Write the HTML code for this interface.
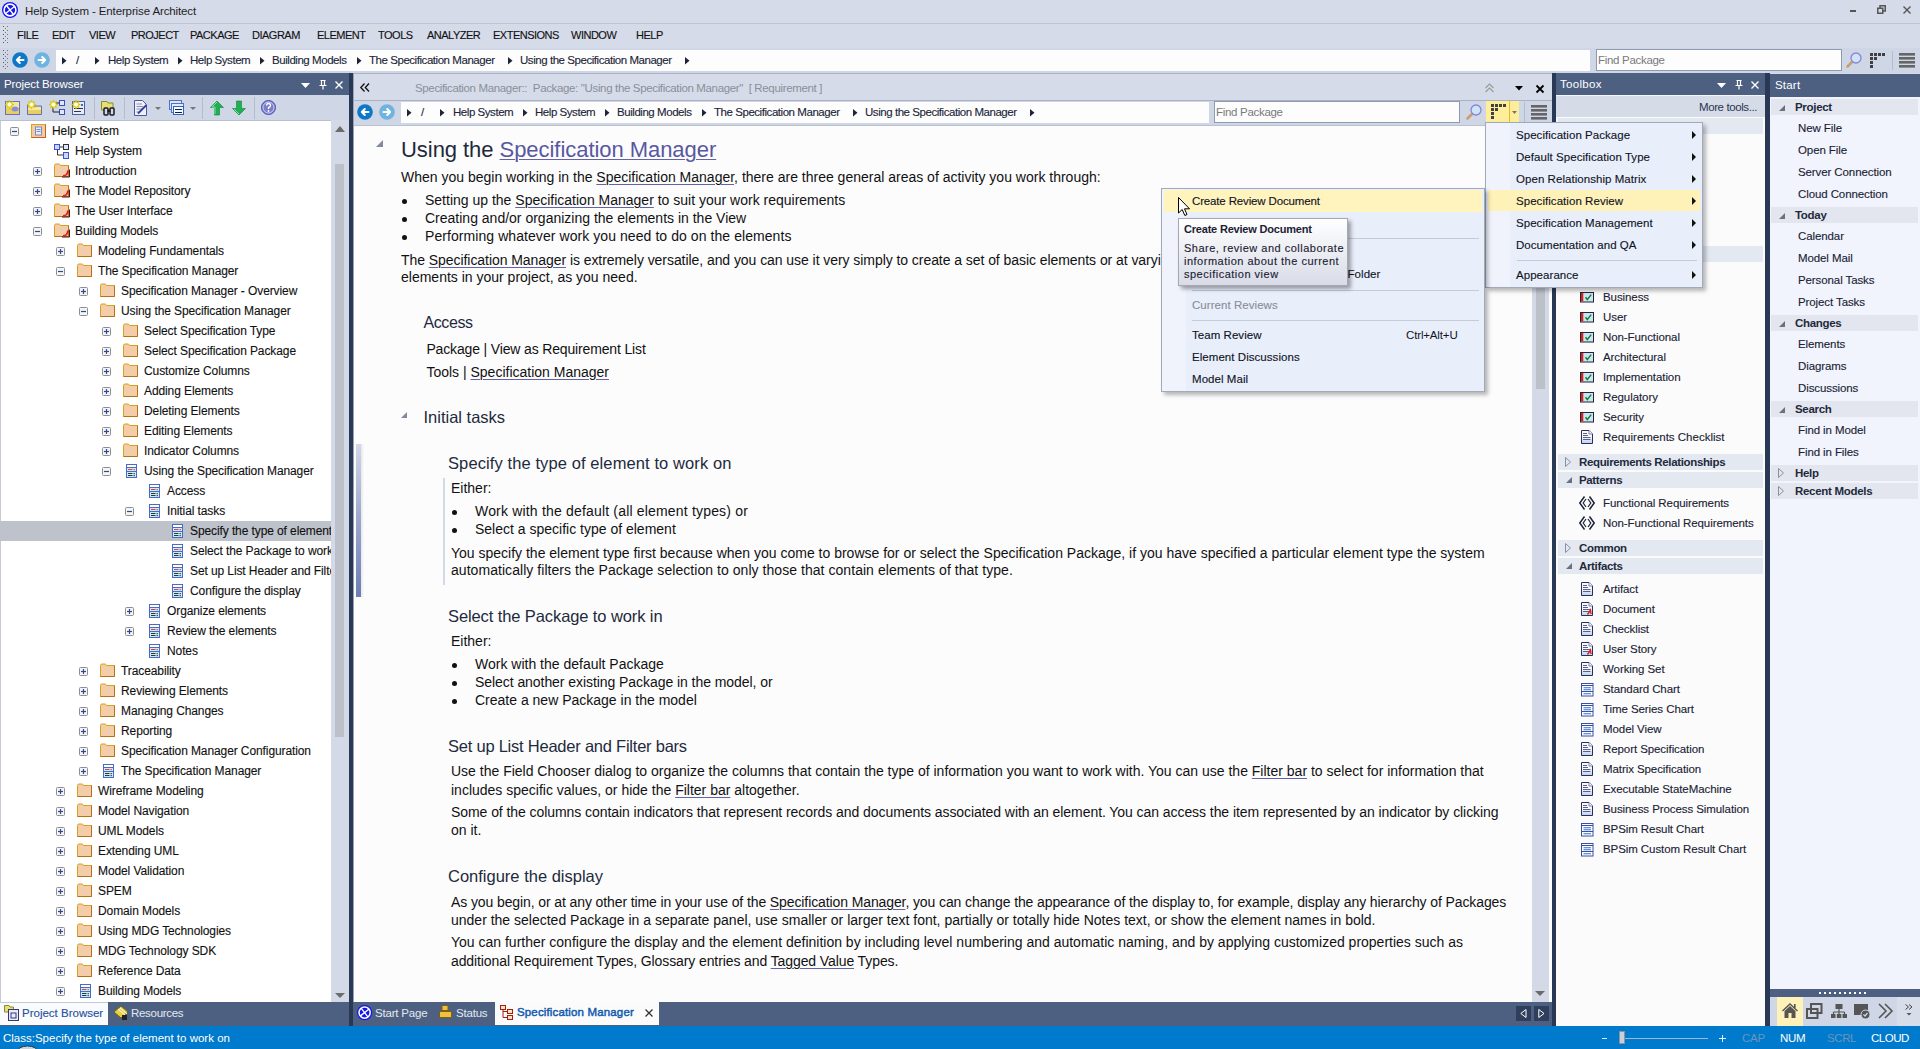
<!DOCTYPE html><html><head><meta charset="utf-8"><style>
html,body{margin:0;padding:0;}
body{width:1920px;height:1049px;position:relative;overflow:hidden;background:#D6DBE9;font-family:"Liberation Sans",sans-serif;}
.t{position:absolute;white-space:nowrap;line-height:1.15;}
.ui{-webkit-text-stroke:0.12px currentColor}
svg{overflow:visible}
</style></head><body>
<div style="position:absolute;left:0px;top:0px;width:1920px;height:23px;background:#D6DBE9"></div>
<div style="position:absolute;left:0px;top:23px;width:1920px;height:1px;background:#BFC5D3"></div>
<svg style="position:absolute;left:2px;top:2px;" width="17" height="17" viewBox="0 0 17 17"><g transform="scale(1.0)"><circle cx="8" cy="8" r="8" fill="#1414F0"/><circle cx="8" cy="8" r="5.9" fill="none" stroke="#fff" stroke-width="1.6"/><g transform="rotate(-38 8 8)"><path d="M8 2 V14 M2 8 H14" stroke="#fff" stroke-width="1.4"/></g></g></svg>
<div class="t " style="left:25px;top:4.59px;font-size:11.5px;color:#1E1E1E;font-weight:normal;letter-spacing:-0.12px">Help System - Enterprise Architect</div>
<div style="position:absolute;left:1850px;top:10px;width:6px;height:2px;background:#555"></div>
<svg style="position:absolute;left:1877px;top:5px;" width="9" height="9" viewBox="0 0 9 9"><rect x="0.75" y="3.25" width="5" height="5" fill="none" stroke="#555" stroke-width="1.5"/><path d="M3 3 V0.75 H8.25 V6 H6" fill="none" stroke="#555" stroke-width="1.5"/></svg>
<svg style="position:absolute;left:1903px;top:6px;" width="8" height="8" viewBox="0 0 8 8"><path d="M0.5 0.5 L7.5 7.5 M7.5 0.5 L0.5 7.5" stroke="#555" stroke-width="1.4"/></svg>
<div style="position:absolute;left:0px;top:24px;width:1920px;height:24px;background:#D6DBE9"></div>
<svg style="position:absolute;left:2px;top:26px;" width="5" height="18" viewBox="0 0 5 18"><rect x="1" y="0" width="1" height="1" fill="#555"/><rect x="5" y="0" width="1" height="1" fill="#777"/><rect x="3" y="2" width="1" height="1" fill="#555"/><rect x="3" y="2" width="1" height="1" fill="#777"/><rect x="1" y="4" width="1" height="1" fill="#555"/><rect x="5" y="4" width="1" height="1" fill="#777"/><rect x="3" y="6" width="1" height="1" fill="#555"/><rect x="3" y="6" width="1" height="1" fill="#777"/><rect x="1" y="8" width="1" height="1" fill="#555"/><rect x="5" y="8" width="1" height="1" fill="#777"/><rect x="3" y="10" width="1" height="1" fill="#555"/><rect x="3" y="10" width="1" height="1" fill="#777"/><rect x="1" y="12" width="1" height="1" fill="#555"/><rect x="5" y="12" width="1" height="1" fill="#777"/><rect x="3" y="14" width="1" height="1" fill="#555"/><rect x="3" y="14" width="1" height="1" fill="#777"/><rect x="1" y="16" width="1" height="1" fill="#555"/><rect x="5" y="16" width="1" height="1" fill="#777"/></svg>
<div class="t ui" style="left:17px;top:28.75px;font-size:11px;color:#111;font-weight:normal;letter-spacing:-0.5px">FILE</div>
<div class="t ui" style="left:52px;top:28.75px;font-size:11px;color:#111;font-weight:normal;letter-spacing:-0.5px">EDIT</div>
<div class="t ui" style="left:89px;top:28.75px;font-size:11px;color:#111;font-weight:normal;letter-spacing:-0.5px">VIEW</div>
<div class="t ui" style="left:131px;top:28.75px;font-size:11px;color:#111;font-weight:normal;letter-spacing:-0.5px">PROJECT</div>
<div class="t ui" style="left:190px;top:28.75px;font-size:11px;color:#111;font-weight:normal;letter-spacing:-0.5px">PACKAGE</div>
<div class="t ui" style="left:252px;top:28.75px;font-size:11px;color:#111;font-weight:normal;letter-spacing:-0.5px">DIAGRAM</div>
<div class="t ui" style="left:317px;top:28.75px;font-size:11px;color:#111;font-weight:normal;letter-spacing:-0.5px">ELEMENT</div>
<div class="t ui" style="left:378px;top:28.75px;font-size:11px;color:#111;font-weight:normal;letter-spacing:-0.5px">TOOLS</div>
<div class="t ui" style="left:427px;top:28.75px;font-size:11px;color:#111;font-weight:normal;letter-spacing:-0.5px">ANALYZER</div>
<div class="t ui" style="left:493px;top:28.75px;font-size:11px;color:#111;font-weight:normal;letter-spacing:-0.5px">EXTENSIONS</div>
<div class="t ui" style="left:571px;top:28.75px;font-size:11px;color:#111;font-weight:normal;letter-spacing:-0.5px">WINDOW</div>
<div class="t ui" style="left:636px;top:28.75px;font-size:11px;color:#111;font-weight:normal;letter-spacing:-0.5px">HELP</div>
<div style="position:absolute;left:0px;top:48px;width:1920px;height:25px;background:#CFD6E5"></div>
<svg style="position:absolute;left:2px;top:50px;" width="5" height="20" viewBox="0 0 5 20"><rect x="1" y="0" width="1" height="1" fill="#555"/><rect x="5" y="0" width="1" height="1" fill="#777"/><rect x="3" y="2" width="1" height="1" fill="#555"/><rect x="3" y="2" width="1" height="1" fill="#777"/><rect x="1" y="4" width="1" height="1" fill="#555"/><rect x="5" y="4" width="1" height="1" fill="#777"/><rect x="3" y="6" width="1" height="1" fill="#555"/><rect x="3" y="6" width="1" height="1" fill="#777"/><rect x="1" y="8" width="1" height="1" fill="#555"/><rect x="5" y="8" width="1" height="1" fill="#777"/><rect x="3" y="10" width="1" height="1" fill="#555"/><rect x="3" y="10" width="1" height="1" fill="#777"/><rect x="1" y="12" width="1" height="1" fill="#555"/><rect x="5" y="12" width="1" height="1" fill="#777"/><rect x="3" y="14" width="1" height="1" fill="#555"/><rect x="3" y="14" width="1" height="1" fill="#777"/><rect x="1" y="16" width="1" height="1" fill="#555"/><rect x="5" y="16" width="1" height="1" fill="#777"/><rect x="3" y="18" width="1" height="1" fill="#555"/><rect x="3" y="18" width="1" height="1" fill="#777"/></svg>
<svg style="position:absolute;left:12px;top:52px;" width="16" height="16" viewBox="0 0 16 16"><circle cx="8" cy="8" r="7.8" fill="#0F78C6"/><path d="M11.5 8 H4.8 M7.8 5 L4.8 8 L7.8 11" fill="none" stroke="#fff" stroke-width="2" stroke-linecap="round" stroke-linejoin="round"/></svg>
<svg style="position:absolute;left:34px;top:52px;" width="16" height="16" viewBox="0 0 16 16"><circle cx="8" cy="8" r="7.8" fill="#6FB3E0"/><path d="M4.5 8 H11.2 M8.2 5 L11.2 8 L8.2 11" fill="none" stroke="#fff" stroke-width="2" stroke-linecap="round" stroke-linejoin="round"/></svg>
<div style="position:absolute;left:56px;top:50px;width:1534px;height:21px;background:#FDFDFE"></div>
<svg style="position:absolute;left:61.5px;top:57px;" width="5" height="8" viewBox="0 0 5 8"><path d="M0 0 L4.5 3.75 L0 7.5Z" fill="#1B2536"/></svg>
<div class="t ui" style="left:76px;top:54.09px;font-size:11.5px;color:#1B2536;font-weight:normal;letter-spacing:-0.45px">/</div>
<svg style="position:absolute;left:94.5px;top:57px;" width="5" height="8" viewBox="0 0 5 8"><path d="M0 0 L4.5 3.75 L0 7.5Z" fill="#1B2536"/></svg>
<div class="t ui" style="left:108px;top:54.09px;font-size:11.5px;color:#1B2536;font-weight:normal;letter-spacing:-0.45px">Help System</div>
<svg style="position:absolute;left:177.5px;top:57px;" width="5" height="8" viewBox="0 0 5 8"><path d="M0 0 L4.5 3.75 L0 7.5Z" fill="#1B2536"/></svg>
<div class="t ui" style="left:190px;top:54.09px;font-size:11.5px;color:#1B2536;font-weight:normal;letter-spacing:-0.45px">Help System</div>
<svg style="position:absolute;left:259.5px;top:57px;" width="5" height="8" viewBox="0 0 5 8"><path d="M0 0 L4.5 3.75 L0 7.5Z" fill="#1B2536"/></svg>
<div class="t ui" style="left:272px;top:54.09px;font-size:11.5px;color:#1B2536;font-weight:normal;letter-spacing:-0.45px">Building Models</div>
<svg style="position:absolute;left:356.5px;top:57px;" width="5" height="8" viewBox="0 0 5 8"><path d="M0 0 L4.5 3.75 L0 7.5Z" fill="#1B2536"/></svg>
<div class="t ui" style="left:369px;top:54.09px;font-size:11.5px;color:#1B2536;font-weight:normal;letter-spacing:-0.45px">The Specification Manager</div>
<svg style="position:absolute;left:507.5px;top:57px;" width="5" height="8" viewBox="0 0 5 8"><path d="M0 0 L4.5 3.75 L0 7.5Z" fill="#1B2536"/></svg>
<div class="t ui" style="left:520px;top:54.09px;font-size:11.5px;color:#1B2536;font-weight:normal;letter-spacing:-0.45px">Using the Specification Manager</div>
<svg style="position:absolute;left:684.5px;top:57px;" width="5" height="8" viewBox="0 0 5 8"><path d="M0 0 L4.5 3.75 L0 7.5Z" fill="#1B2536"/></svg>
<div style="position:absolute;left:1596px;top:49px;width:246px;height:22px;background:#FDFDFE;border:1px solid #8E9AB0;box-sizing:border-box"></div>
<div class="t " style="left:1598px;top:54.09px;font-size:11.5px;color:#7A7A7A;font-weight:normal;letter-spacing:-0.3px">Find Package</div>
<svg style="position:absolute;left:1846px;top:52px;" width="16" height="16" viewBox="0 0 16 16"><path d="M1.5 14.5 L6 10" stroke="#C8A070" stroke-width="2.6" stroke-linecap="round"/><circle cx="10" cy="6" r="5" fill="#CDE4F7" stroke="#8C82D8" stroke-width="1.3"/></svg>
<svg style="position:absolute;left:1870px;top:53px;" width="15" height="15" viewBox="0 0 15 15"><rect x="0" y="0" width="3" height="3" fill="#404040"/><rect x="4" y="0" width="3" height="3" fill="#404040"/><rect x="8" y="0" width="3" height="3" fill="#404040"/><rect x="12" y="0" width="3" height="3" fill="#404040"/><rect x="0" y="4" width="3" height="3" fill="#404040"/><rect x="4" y="4" width="3" height="3" fill="#404040"/><rect x="0" y="8" width="3" height="3" fill="#404040"/><rect x="0" y="12" width="3" height="3" fill="#404040"/></svg>
<div style="position:absolute;left:1892px;top:51px;width:1px;height:19px;background:#B5BDCC"></div>
<svg style="position:absolute;left:1899px;top:53px;" width="16" height="15" viewBox="0 0 16 15"><rect x="0" y="0" width="16" height="2.6" fill="#666"/><rect x="0" y="4" width="16" height="2.6" fill="#666"/><rect x="0" y="8" width="16" height="2.6" fill="#666"/><rect x="0" y="12" width="16" height="2.6" fill="#666"/></svg>
<div style="position:absolute;left:0px;top:73px;width:349px;height:22px;background:#4D6082"></div>
<div class="t " style="left:4px;top:77.59px;font-size:11.5px;color:#FFFFFF;font-weight:normal;letter-spacing:-0.12px">Project Browser</div>
<svg style="position:absolute;left:301px;top:83px;" width="10" height="6" viewBox="0 0 10 6"><path d="M0 0 H9 L4.5 5Z" fill="#fff"/></svg>
<svg style="position:absolute;left:319px;top:80px;" width="8" height="10" viewBox="0 0 8 10"><path d="M1.5 0.5 H6.5 M2.5 0.5 V5.5 M5.5 0.5 V5.5 M0.5 5.5 H7.5 M4 5.5 V9.5" fill="none" stroke="#fff" stroke-width="1.2"/></svg>
<svg style="position:absolute;left:335px;top:81px;" width="8" height="8" viewBox="0 0 8 8"><path d="M0.5 0.5 L7.5 7.5 M7.5 0.5 L0.5 7.5" stroke="#fff" stroke-width="1.4"/></svg>
<div style="position:absolute;left:0px;top:95px;width:349px;height:25px;background:#CFD6E5"></div>
<div style="position:absolute;left:0px;top:120px;width:331px;height:1px;background:#B9C0CE"></div>
<div style="position:absolute;left:0px;top:121px;width:331px;height:881px;background:#FFFFFF"></div>
<div style="position:absolute;left:0px;top:121px;width:1px;height:881px;background:#C5CAD5"></div>
<div style="position:absolute;left:331px;top:121px;width:18px;height:881px;background:#D3D9E6"></div>
<svg style="position:absolute;left:335px;top:126px;" width="10" height="6" viewBox="0 0 10 6"><path d="M0 6 L5 0 L10 6Z" fill="#6B6B6B"/></svg>
<div style="position:absolute;left:335px;top:164px;width:9px;height:573px;background:#BCC0C9"></div>
<svg style="position:absolute;left:335px;top:993px;" width="10" height="5" viewBox="0 0 10 5"><path d="M0 0 H10 L5 5Z" fill="#6B6B6B"/></svg>
<div style="position:absolute;left:349px;top:73px;width:4px;height:953px;background:#293955"></div>
<svg style="position:absolute;left:5px;top:100px;" width="16" height="16" viewBox="0 0 16 16"><rect x="0.5" y="1.5" width="14" height="13" fill="#E8D060" stroke="#6A70B8"/><rect x="1" y="2" width="13" height="6" fill="#F4E8A0"/><ellipse cx="10" cy="9" rx="3.5" ry="2.5" fill="#8890D8"/><line x1="6.60" y1="4.50" x2="8.88" y2="4.50" stroke="#D8C000" stroke-width="1.3"/><line x1="5.98" y1="5.98" x2="7.59" y2="7.59" stroke="#D8C000" stroke-width="1.3"/><line x1="4.50" y1="6.60" x2="4.50" y2="8.88" stroke="#D8C000" stroke-width="1.3"/><line x1="3.02" y1="5.98" x2="1.41" y2="7.59" stroke="#D8C000" stroke-width="1.3"/><line x1="2.40" y1="4.50" x2="0.12" y2="4.50" stroke="#D8C000" stroke-width="1.3"/><line x1="3.02" y1="3.02" x2="1.41" y2="1.41" stroke="#D8C000" stroke-width="1.3"/><line x1="4.50" y1="2.40" x2="4.50" y2="0.12" stroke="#D8C000" stroke-width="1.3"/><line x1="5.98" y1="3.02" x2="7.59" y2="1.41" stroke="#D8C000" stroke-width="1.3"/><circle cx="4.5" cy="4.5" r="2.625" fill="#FFFFE0" stroke="#E0C800" stroke-width="1"/></svg>
<svg style="position:absolute;left:27px;top:100px;" width="16" height="16" viewBox="0 0 16 16"><path d="M0.5 4.5 H6 L7 6 H14.5 V14.5 H0.5Z" fill="#E8D060" stroke="#6A70B8"/><rect x="1" y="7" width="13" height="3" fill="#F4E8A0"/><line x1="6.60" y1="4.50" x2="8.88" y2="4.50" stroke="#D8C000" stroke-width="1.3"/><line x1="5.98" y1="5.98" x2="7.59" y2="7.59" stroke="#D8C000" stroke-width="1.3"/><line x1="4.50" y1="6.60" x2="4.50" y2="8.88" stroke="#D8C000" stroke-width="1.3"/><line x1="3.02" y1="5.98" x2="1.41" y2="7.59" stroke="#D8C000" stroke-width="1.3"/><line x1="2.40" y1="4.50" x2="0.12" y2="4.50" stroke="#D8C000" stroke-width="1.3"/><line x1="3.02" y1="3.02" x2="1.41" y2="1.41" stroke="#D8C000" stroke-width="1.3"/><line x1="4.50" y1="2.40" x2="4.50" y2="0.12" stroke="#D8C000" stroke-width="1.3"/><line x1="5.98" y1="3.02" x2="7.59" y2="1.41" stroke="#D8C000" stroke-width="1.3"/><circle cx="4.5" cy="4.5" r="2.625" fill="#FFFFE0" stroke="#E0C800" stroke-width="1"/></svg>
<svg style="position:absolute;left:49px;top:100px;" width="16" height="16" viewBox="0 0 16 16"><rect x="10.5" y="0.5" width="5" height="5" fill="#E0E8FF" stroke="#4050B0"/><rect x="10.5" y="9.5" width="5" height="5" fill="#E0E8FF" stroke="#4050B0"/><path d="M4 6 V12 H10.5 M7 3 H10.5" stroke="#222" fill="none"/><line x1="6.60" y1="4.50" x2="8.88" y2="4.50" stroke="#D8C000" stroke-width="1.3"/><line x1="5.98" y1="5.98" x2="7.59" y2="7.59" stroke="#D8C000" stroke-width="1.3"/><line x1="4.50" y1="6.60" x2="4.50" y2="8.88" stroke="#D8C000" stroke-width="1.3"/><line x1="3.02" y1="5.98" x2="1.41" y2="7.59" stroke="#D8C000" stroke-width="1.3"/><line x1="2.40" y1="4.50" x2="0.12" y2="4.50" stroke="#D8C000" stroke-width="1.3"/><line x1="3.02" y1="3.02" x2="1.41" y2="1.41" stroke="#D8C000" stroke-width="1.3"/><line x1="4.50" y1="2.40" x2="4.50" y2="0.12" stroke="#D8C000" stroke-width="1.3"/><line x1="5.98" y1="3.02" x2="7.59" y2="1.41" stroke="#D8C000" stroke-width="1.3"/><circle cx="4.5" cy="4.5" r="2.625" fill="#FFFFE0" stroke="#E0C800" stroke-width="1"/></svg>
<svg style="position:absolute;left:72px;top:100px;" width="13" height="16" viewBox="0 0 13 16"><rect x="0.5" y="1.5" width="12" height="13" fill="#E8ECF8" stroke="#5060A8"/><path d="M2 8.5 H11 M2 11.5 H9" stroke="#334" stroke-width="1.2"/><rect x="9" y="4" width="2" height="2" fill="#3070D0"/><line x1="6.10" y1="4.50" x2="8.38" y2="4.50" stroke="#D8C000" stroke-width="1.3"/><line x1="5.48" y1="5.98" x2="7.09" y2="7.59" stroke="#D8C000" stroke-width="1.3"/><line x1="4.00" y1="6.60" x2="4.00" y2="8.88" stroke="#D8C000" stroke-width="1.3"/><line x1="2.52" y1="5.98" x2="0.91" y2="7.59" stroke="#D8C000" stroke-width="1.3"/><line x1="1.90" y1="4.50" x2="-0.38" y2="4.50" stroke="#D8C000" stroke-width="1.3"/><line x1="2.52" y1="3.02" x2="0.91" y2="1.41" stroke="#D8C000" stroke-width="1.3"/><line x1="4.00" y1="2.40" x2="4.00" y2="0.12" stroke="#D8C000" stroke-width="1.3"/><line x1="5.48" y1="3.02" x2="7.09" y2="1.41" stroke="#D8C000" stroke-width="1.3"/><circle cx="4" cy="4.5" r="2.625" fill="#FFFFE0" stroke="#E0C800" stroke-width="1"/></svg>
<div style="position:absolute;left:94px;top:97px;width:1px;height:22px;background:#B5BDCC"></div>
<svg style="position:absolute;left:101px;top:101px;" width="16" height="15" viewBox="0 0 16 15"><path d="M0.5 0.5 H6 L7 2 H12 V9 H0.5Z" fill="#E8E070" stroke="#8A8A30"/><rect x="3" y="7" width="4" height="7" rx="1" fill="#D8D8E0" stroke="#1A1A28" stroke-width="1.5"/><rect x="9" y="7" width="4" height="7" rx="1" fill="#D8D8E0" stroke="#1A1A28" stroke-width="1.5"/><rect x="6.5" y="9" width="3" height="2" fill="#1A1A28"/></svg>
<div style="position:absolute;left:124px;top:97px;width:1px;height:22px;background:#B5BDCC"></div>
<svg style="position:absolute;left:134px;top:100px;" width="14" height="16" viewBox="0 0 14 16"><path d="M0.5 0.5 H8.5 L12.5 4.5 V15.5 H0.5Z" fill="#F0F0F8" stroke="#4A58A8"/><path d="M2.5 4 H8 M2.5 6.5 H9 M2.5 9 H9 M2.5 12 H6" stroke="#8890A8"/><path d="M4 13.5 L12.5 5" stroke="#3040A0" stroke-width="1.8"/></svg>
<svg style="position:absolute;left:155px;top:107px;" width="6" height="3" viewBox="0 0 6 3"><path d="M0 0 H6 L3 3Z" fill="#777"/></svg>
<svg style="position:absolute;left:169px;top:100px;" width="16" height="16" viewBox="0 0 16 16"><rect x="0.5" y="0.5" width="12" height="9" fill="#D8E4F8" stroke="#5070C8"/><rect x="2.5" y="3.5" width="12" height="9" fill="#E4ECFA" stroke="#5070C8"/><rect x="4.5" y="6.5" width="10" height="8" fill="#F4F8FF" stroke="#3060C0"/><path d="M6 9.5 H13 M6 12.5 H13" stroke="#102040" stroke-width="1.2"/></svg>
<svg style="position:absolute;left:190px;top:107px;" width="6" height="3" viewBox="0 0 6 3"><path d="M0 0 H6 L3 3Z" fill="#777"/></svg>
<div style="position:absolute;left:202px;top:97px;width:1px;height:22px;background:#B5BDCC"></div>
<svg style="position:absolute;left:210px;top:101px;" width="14" height="14" viewBox="0 0 14 14"><path d="M7 0 L13.5 6.5 H9.5 V14 H4.5 V6.5 H0.5Z" fill="#20B050" stroke="#108040" stroke-width="0.6"/><path d="M7 1 L2 6 H5 V13" stroke="#80E0A0" fill="none" stroke-width="1"/></svg>
<svg style="position:absolute;left:232px;top:101px;" width="14" height="14" viewBox="0 0 14 14"><path d="M7 14 L13.5 7.5 H9.5 V0 H4.5 V7.5 H0.5Z" fill="#20B050" stroke="#108040" stroke-width="0.6"/><path d="M2 8 L7 13" stroke="#80E0A0" fill="none" stroke-width="1"/></svg>
<div style="position:absolute;left:254px;top:97px;width:1px;height:22px;background:#B5BDCC"></div>
<svg style="position:absolute;left:261px;top:100px;" width="16" height="16" viewBox="0 0 16 16"><circle cx="7.5" cy="7.5" r="7" fill="#7C7EC8" stroke="#4050B8" stroke-width="1"/><circle cx="7.5" cy="7.5" r="5.5" fill="none" stroke="#E8E8FF" stroke-width="0.8"/><path d="M5.5 5.5 Q5.5 3.5 7.5 3.5 Q9.5 3.5 9.5 5.5 Q9.5 7 7.5 7.5 V9" fill="none" stroke="#fff" stroke-width="1.3"/><circle cx="7.5" cy="11" r="0.9" fill="#fff"/></svg>
<div style="position:absolute;left:0;top:0;width:331px;height:1002px;overflow:hidden;clip-path:inset(121px 0 0 0px)">
<svg style="position:absolute;left:10px;top:127px;" width="9" height="9" viewBox="0 0 9 9"><rect x="0.5" y="0.5" width="8" height="8" rx="1" fill="#F4F4F4" stroke="#8E8E8E"/><path d="M2 4.5 H7" stroke="#2A4A9A" stroke-width="1.2"/></svg>
<svg style="position:absolute;left:31px;top:124px;" width="16" height="15" viewBox="0 0 16 15"><rect x="0.5" y="0.5" width="14" height="13" fill="#F3CBA5" stroke="#E0A020"/><path d="M0.5 13.5 H14.5 V0.5" fill="none" stroke="#C86020"/><rect x="4.5" y="3" width="6" height="8" fill="#E8EEFA" stroke="#7A8CC8"/><path d="M5.5 5.5 H9.5 M5.5 7.5 H9.5" stroke="#7A8CC8"/></svg>
<div class="t ui" style="left:52px;top:124.84px;font-size:12px;color:#111;font-weight:normal;letter-spacing:-0.1px">Help System</div>
<svg style="position:absolute;left:54px;top:144px;" width="16" height="16" viewBox="0 0 16 16"><path d="M3.5 4 V11 H10 M5 3 H10" stroke="#333" fill="none"/><rect x="0.5" y="0.5" width="5" height="5" fill="#C8D8FF" stroke="#4050D0"/><rect x="9.5" y="0.5" width="5" height="5" fill="#DDE6FF" stroke="#333"/><rect x="9.5" y="8.5" width="5" height="6" fill="#C8D8FF" stroke="#4050D0"/></svg>
<div class="t ui" style="left:75px;top:144.84px;font-size:12px;color:#111;font-weight:normal;letter-spacing:-0.1px">Help System</div>
<svg style="position:absolute;left:33px;top:167px;" width="9" height="9" viewBox="0 0 9 9"><rect x="0.5" y="0.5" width="8" height="8" rx="1" fill="#F4F4F4" stroke="#8E8E8E"/><path d="M2 4.5 H7" stroke="#2A4A9A" stroke-width="1.2"/><path d="M4.5 2 V7" stroke="#2A4A9A" stroke-width="1.2"/></svg>
<svg style="position:absolute;left:54px;top:163px;" width="16" height="15" viewBox="0 0 16 15"><path d="M0.5 2.5 Q0.5 1 2 1 H5 Q6 1 6.5 2.5 H14.5 V13.5 H0.5Z" fill="#F3CDA8" stroke="#D8A020"/><path d="M0.5 13.5 H14.5 V2.5" fill="none" stroke="#B87018"/><path d="M8 14 H15.5 V6.5" fill="none" stroke="#3A1A10" stroke-width="1"/><path d="M9 13 Q13.5 12.8 14 7.5" fill="none" stroke="#E01818" stroke-width="1.8"/><path d="M11.5 12.5 Q14 12 14.5 10" fill="none" stroke="#FF6060" stroke-width="0.6"/></svg>
<div class="t ui" style="left:75px;top:164.84px;font-size:12px;color:#111;font-weight:normal;letter-spacing:-0.1px">Introduction</div>
<svg style="position:absolute;left:33px;top:187px;" width="9" height="9" viewBox="0 0 9 9"><rect x="0.5" y="0.5" width="8" height="8" rx="1" fill="#F4F4F4" stroke="#8E8E8E"/><path d="M2 4.5 H7" stroke="#2A4A9A" stroke-width="1.2"/><path d="M4.5 2 V7" stroke="#2A4A9A" stroke-width="1.2"/></svg>
<svg style="position:absolute;left:54px;top:183px;" width="16" height="15" viewBox="0 0 16 15"><path d="M0.5 2.5 Q0.5 1 2 1 H5 Q6 1 6.5 2.5 H14.5 V13.5 H0.5Z" fill="#F3CDA8" stroke="#D8A020"/><path d="M0.5 13.5 H14.5 V2.5" fill="none" stroke="#B87018"/><path d="M8 14 H15.5 V6.5" fill="none" stroke="#3A1A10" stroke-width="1"/><path d="M9 13 Q13.5 12.8 14 7.5" fill="none" stroke="#E01818" stroke-width="1.8"/><path d="M11.5 12.5 Q14 12 14.5 10" fill="none" stroke="#FF6060" stroke-width="0.6"/></svg>
<div class="t ui" style="left:75px;top:184.84px;font-size:12px;color:#111;font-weight:normal;letter-spacing:-0.1px">The Model Repository</div>
<svg style="position:absolute;left:33px;top:207px;" width="9" height="9" viewBox="0 0 9 9"><rect x="0.5" y="0.5" width="8" height="8" rx="1" fill="#F4F4F4" stroke="#8E8E8E"/><path d="M2 4.5 H7" stroke="#2A4A9A" stroke-width="1.2"/><path d="M4.5 2 V7" stroke="#2A4A9A" stroke-width="1.2"/></svg>
<svg style="position:absolute;left:54px;top:203px;" width="16" height="15" viewBox="0 0 16 15"><path d="M0.5 2.5 Q0.5 1 2 1 H5 Q6 1 6.5 2.5 H14.5 V13.5 H0.5Z" fill="#F3CDA8" stroke="#D8A020"/><path d="M0.5 13.5 H14.5 V2.5" fill="none" stroke="#B87018"/><path d="M8 14 H15.5 V6.5" fill="none" stroke="#3A1A10" stroke-width="1"/><path d="M9 13 Q13.5 12.8 14 7.5" fill="none" stroke="#E01818" stroke-width="1.8"/><path d="M11.5 12.5 Q14 12 14.5 10" fill="none" stroke="#FF6060" stroke-width="0.6"/></svg>
<div class="t ui" style="left:75px;top:204.84px;font-size:12px;color:#111;font-weight:normal;letter-spacing:-0.1px">The User Interface</div>
<svg style="position:absolute;left:33px;top:227px;" width="9" height="9" viewBox="0 0 9 9"><rect x="0.5" y="0.5" width="8" height="8" rx="1" fill="#F4F4F4" stroke="#8E8E8E"/><path d="M2 4.5 H7" stroke="#2A4A9A" stroke-width="1.2"/></svg>
<svg style="position:absolute;left:54px;top:223px;" width="16" height="15" viewBox="0 0 16 15"><path d="M0.5 2.5 Q0.5 1 2 1 H5 Q6 1 6.5 2.5 H14.5 V13.5 H0.5Z" fill="#F3CDA8" stroke="#D8A020"/><path d="M0.5 13.5 H14.5 V2.5" fill="none" stroke="#B87018"/><path d="M8 14 H15.5 V6.5" fill="none" stroke="#3A1A10" stroke-width="1"/><path d="M9 13 Q13.5 12.8 14 7.5" fill="none" stroke="#E01818" stroke-width="1.8"/><path d="M11.5 12.5 Q14 12 14.5 10" fill="none" stroke="#FF6060" stroke-width="0.6"/></svg>
<div class="t ui" style="left:75px;top:224.84px;font-size:12px;color:#111;font-weight:normal;letter-spacing:-0.1px">Building Models</div>
<svg style="position:absolute;left:56px;top:247px;" width="9" height="9" viewBox="0 0 9 9"><rect x="0.5" y="0.5" width="8" height="8" rx="1" fill="#F4F4F4" stroke="#8E8E8E"/><path d="M2 4.5 H7" stroke="#2A4A9A" stroke-width="1.2"/><path d="M4.5 2 V7" stroke="#2A4A9A" stroke-width="1.2"/></svg>
<svg style="position:absolute;left:77px;top:243px;" width="16" height="15" viewBox="0 0 16 15"><path d="M0.5 2.5 Q0.5 1 2 1 H5 Q6 1 6.5 2.5 H14.5 V13.5 H0.5Z" fill="#F3CDA8" stroke="#D8A020"/><path d="M0.5 13.5 H14.5 V2.5" fill="none" stroke="#B87018"/></svg>
<div class="t ui" style="left:98px;top:244.84px;font-size:12px;color:#111;font-weight:normal;letter-spacing:-0.1px">Modeling Fundamentals</div>
<svg style="position:absolute;left:56px;top:267px;" width="9" height="9" viewBox="0 0 9 9"><rect x="0.5" y="0.5" width="8" height="8" rx="1" fill="#F4F4F4" stroke="#8E8E8E"/><path d="M2 4.5 H7" stroke="#2A4A9A" stroke-width="1.2"/></svg>
<svg style="position:absolute;left:77px;top:263px;" width="16" height="15" viewBox="0 0 16 15"><path d="M0.5 2.5 Q0.5 1 2 1 H5 Q6 1 6.5 2.5 H14.5 V13.5 H0.5Z" fill="#F3CDA8" stroke="#D8A020"/><path d="M0.5 13.5 H14.5 V2.5" fill="none" stroke="#B87018"/></svg>
<div class="t ui" style="left:98px;top:264.84px;font-size:12px;color:#111;font-weight:normal;letter-spacing:-0.1px">The Specification Manager</div>
<svg style="position:absolute;left:79px;top:287px;" width="9" height="9" viewBox="0 0 9 9"><rect x="0.5" y="0.5" width="8" height="8" rx="1" fill="#F4F4F4" stroke="#8E8E8E"/><path d="M2 4.5 H7" stroke="#2A4A9A" stroke-width="1.2"/><path d="M4.5 2 V7" stroke="#2A4A9A" stroke-width="1.2"/></svg>
<svg style="position:absolute;left:100px;top:283px;" width="16" height="15" viewBox="0 0 16 15"><path d="M0.5 2.5 Q0.5 1 2 1 H5 Q6 1 6.5 2.5 H14.5 V13.5 H0.5Z" fill="#F3CDA8" stroke="#D8A020"/><path d="M0.5 13.5 H14.5 V2.5" fill="none" stroke="#B87018"/></svg>
<div class="t ui" style="left:121px;top:284.84px;font-size:12px;color:#111;font-weight:normal;letter-spacing:-0.1px">Specification Manager - Overview</div>
<svg style="position:absolute;left:79px;top:307px;" width="9" height="9" viewBox="0 0 9 9"><rect x="0.5" y="0.5" width="8" height="8" rx="1" fill="#F4F4F4" stroke="#8E8E8E"/><path d="M2 4.5 H7" stroke="#2A4A9A" stroke-width="1.2"/></svg>
<svg style="position:absolute;left:100px;top:303px;" width="16" height="15" viewBox="0 0 16 15"><path d="M0.5 2.5 Q0.5 1 2 1 H5 Q6 1 6.5 2.5 H14.5 V13.5 H0.5Z" fill="#F3CDA8" stroke="#D8A020"/><path d="M0.5 13.5 H14.5 V2.5" fill="none" stroke="#B87018"/></svg>
<div class="t ui" style="left:121px;top:304.84px;font-size:12px;color:#111;font-weight:normal;letter-spacing:-0.1px">Using the Specification Manager</div>
<svg style="position:absolute;left:102px;top:327px;" width="9" height="9" viewBox="0 0 9 9"><rect x="0.5" y="0.5" width="8" height="8" rx="1" fill="#F4F4F4" stroke="#8E8E8E"/><path d="M2 4.5 H7" stroke="#2A4A9A" stroke-width="1.2"/><path d="M4.5 2 V7" stroke="#2A4A9A" stroke-width="1.2"/></svg>
<svg style="position:absolute;left:123px;top:323px;" width="16" height="15" viewBox="0 0 16 15"><path d="M0.5 2.5 Q0.5 1 2 1 H5 Q6 1 6.5 2.5 H14.5 V13.5 H0.5Z" fill="#F3CDA8" stroke="#D8A020"/><path d="M0.5 13.5 H14.5 V2.5" fill="none" stroke="#B87018"/></svg>
<div class="t ui" style="left:144px;top:324.84px;font-size:12px;color:#111;font-weight:normal;letter-spacing:-0.1px">Select Specification Type</div>
<svg style="position:absolute;left:102px;top:347px;" width="9" height="9" viewBox="0 0 9 9"><rect x="0.5" y="0.5" width="8" height="8" rx="1" fill="#F4F4F4" stroke="#8E8E8E"/><path d="M2 4.5 H7" stroke="#2A4A9A" stroke-width="1.2"/><path d="M4.5 2 V7" stroke="#2A4A9A" stroke-width="1.2"/></svg>
<svg style="position:absolute;left:123px;top:343px;" width="16" height="15" viewBox="0 0 16 15"><path d="M0.5 2.5 Q0.5 1 2 1 H5 Q6 1 6.5 2.5 H14.5 V13.5 H0.5Z" fill="#F3CDA8" stroke="#D8A020"/><path d="M0.5 13.5 H14.5 V2.5" fill="none" stroke="#B87018"/></svg>
<div class="t ui" style="left:144px;top:344.84px;font-size:12px;color:#111;font-weight:normal;letter-spacing:-0.1px">Select Specification Package</div>
<svg style="position:absolute;left:102px;top:367px;" width="9" height="9" viewBox="0 0 9 9"><rect x="0.5" y="0.5" width="8" height="8" rx="1" fill="#F4F4F4" stroke="#8E8E8E"/><path d="M2 4.5 H7" stroke="#2A4A9A" stroke-width="1.2"/><path d="M4.5 2 V7" stroke="#2A4A9A" stroke-width="1.2"/></svg>
<svg style="position:absolute;left:123px;top:363px;" width="16" height="15" viewBox="0 0 16 15"><path d="M0.5 2.5 Q0.5 1 2 1 H5 Q6 1 6.5 2.5 H14.5 V13.5 H0.5Z" fill="#F3CDA8" stroke="#D8A020"/><path d="M0.5 13.5 H14.5 V2.5" fill="none" stroke="#B87018"/></svg>
<div class="t ui" style="left:144px;top:364.84px;font-size:12px;color:#111;font-weight:normal;letter-spacing:-0.1px">Customize Columns</div>
<svg style="position:absolute;left:102px;top:387px;" width="9" height="9" viewBox="0 0 9 9"><rect x="0.5" y="0.5" width="8" height="8" rx="1" fill="#F4F4F4" stroke="#8E8E8E"/><path d="M2 4.5 H7" stroke="#2A4A9A" stroke-width="1.2"/><path d="M4.5 2 V7" stroke="#2A4A9A" stroke-width="1.2"/></svg>
<svg style="position:absolute;left:123px;top:383px;" width="16" height="15" viewBox="0 0 16 15"><path d="M0.5 2.5 Q0.5 1 2 1 H5 Q6 1 6.5 2.5 H14.5 V13.5 H0.5Z" fill="#F3CDA8" stroke="#D8A020"/><path d="M0.5 13.5 H14.5 V2.5" fill="none" stroke="#B87018"/></svg>
<div class="t ui" style="left:144px;top:384.84px;font-size:12px;color:#111;font-weight:normal;letter-spacing:-0.1px">Adding Elements</div>
<svg style="position:absolute;left:102px;top:407px;" width="9" height="9" viewBox="0 0 9 9"><rect x="0.5" y="0.5" width="8" height="8" rx="1" fill="#F4F4F4" stroke="#8E8E8E"/><path d="M2 4.5 H7" stroke="#2A4A9A" stroke-width="1.2"/><path d="M4.5 2 V7" stroke="#2A4A9A" stroke-width="1.2"/></svg>
<svg style="position:absolute;left:123px;top:403px;" width="16" height="15" viewBox="0 0 16 15"><path d="M0.5 2.5 Q0.5 1 2 1 H5 Q6 1 6.5 2.5 H14.5 V13.5 H0.5Z" fill="#F3CDA8" stroke="#D8A020"/><path d="M0.5 13.5 H14.5 V2.5" fill="none" stroke="#B87018"/></svg>
<div class="t ui" style="left:144px;top:404.84px;font-size:12px;color:#111;font-weight:normal;letter-spacing:-0.1px">Deleting Elements</div>
<svg style="position:absolute;left:102px;top:427px;" width="9" height="9" viewBox="0 0 9 9"><rect x="0.5" y="0.5" width="8" height="8" rx="1" fill="#F4F4F4" stroke="#8E8E8E"/><path d="M2 4.5 H7" stroke="#2A4A9A" stroke-width="1.2"/><path d="M4.5 2 V7" stroke="#2A4A9A" stroke-width="1.2"/></svg>
<svg style="position:absolute;left:123px;top:423px;" width="16" height="15" viewBox="0 0 16 15"><path d="M0.5 2.5 Q0.5 1 2 1 H5 Q6 1 6.5 2.5 H14.5 V13.5 H0.5Z" fill="#F3CDA8" stroke="#D8A020"/><path d="M0.5 13.5 H14.5 V2.5" fill="none" stroke="#B87018"/></svg>
<div class="t ui" style="left:144px;top:424.84px;font-size:12px;color:#111;font-weight:normal;letter-spacing:-0.1px">Editing Elements</div>
<svg style="position:absolute;left:102px;top:447px;" width="9" height="9" viewBox="0 0 9 9"><rect x="0.5" y="0.5" width="8" height="8" rx="1" fill="#F4F4F4" stroke="#8E8E8E"/><path d="M2 4.5 H7" stroke="#2A4A9A" stroke-width="1.2"/><path d="M4.5 2 V7" stroke="#2A4A9A" stroke-width="1.2"/></svg>
<svg style="position:absolute;left:123px;top:443px;" width="16" height="15" viewBox="0 0 16 15"><path d="M0.5 2.5 Q0.5 1 2 1 H5 Q6 1 6.5 2.5 H14.5 V13.5 H0.5Z" fill="#F3CDA8" stroke="#D8A020"/><path d="M0.5 13.5 H14.5 V2.5" fill="none" stroke="#B87018"/></svg>
<div class="t ui" style="left:144px;top:444.84px;font-size:12px;color:#111;font-weight:normal;letter-spacing:-0.1px">Indicator Columns</div>
<svg style="position:absolute;left:102px;top:467px;" width="9" height="9" viewBox="0 0 9 9"><rect x="0.5" y="0.5" width="8" height="8" rx="1" fill="#F4F4F4" stroke="#8E8E8E"/><path d="M2 4.5 H7" stroke="#2A4A9A" stroke-width="1.2"/></svg>
<svg style="position:absolute;left:126px;top:464px;" width="11" height="14" viewBox="0 0 11 14"><rect x="0.5" y="0.5" width="10" height="13" fill="#C6EEF8" stroke="#4A68C4"/><rect x="1" y="1" width="9" height="2.5" fill="#FFFFFF"/><path d="M1 3.5 H10 M1 7.5 H10" stroke="#4A68C4"/><path d="M2 5.5 H6.5" stroke="#F03C3C"/><rect x="7.6" y="5" width="1.2" height="1.2" fill="#F03C3C"/><path d="M2 9.5 H6.5 M2 11.5 H6.5" stroke="#333"/><rect x="7.6" y="9" width="1.2" height="1.2" fill="#333"/><rect x="7.6" y="11" width="1.2" height="1.2" fill="#333"/></svg>
<div class="t ui" style="left:144px;top:464.84px;font-size:12px;color:#111;font-weight:normal;letter-spacing:-0.1px">Using the Specification Manager</div>
<svg style="position:absolute;left:149px;top:484px;" width="11" height="14" viewBox="0 0 11 14"><rect x="0.5" y="0.5" width="10" height="13" fill="#C6EEF8" stroke="#4A68C4"/><rect x="1" y="1" width="9" height="2.5" fill="#FFFFFF"/><path d="M1 3.5 H10 M1 7.5 H10" stroke="#4A68C4"/><path d="M2 5.5 H6.5" stroke="#F03C3C"/><rect x="7.6" y="5" width="1.2" height="1.2" fill="#F03C3C"/><path d="M2 9.5 H6.5 M2 11.5 H6.5" stroke="#333"/><rect x="7.6" y="9" width="1.2" height="1.2" fill="#333"/><rect x="7.6" y="11" width="1.2" height="1.2" fill="#333"/></svg>
<div class="t ui" style="left:167px;top:484.84px;font-size:12px;color:#111;font-weight:normal;letter-spacing:-0.1px">Access</div>
<svg style="position:absolute;left:125px;top:507px;" width="9" height="9" viewBox="0 0 9 9"><rect x="0.5" y="0.5" width="8" height="8" rx="1" fill="#F4F4F4" stroke="#8E8E8E"/><path d="M2 4.5 H7" stroke="#2A4A9A" stroke-width="1.2"/></svg>
<svg style="position:absolute;left:149px;top:504px;" width="11" height="14" viewBox="0 0 11 14"><rect x="0.5" y="0.5" width="10" height="13" fill="#C6EEF8" stroke="#4A68C4"/><rect x="1" y="1" width="9" height="2.5" fill="#FFFFFF"/><path d="M1 3.5 H10 M1 7.5 H10" stroke="#4A68C4"/><path d="M2 5.5 H6.5" stroke="#F03C3C"/><rect x="7.6" y="5" width="1.2" height="1.2" fill="#F03C3C"/><path d="M2 9.5 H6.5 M2 11.5 H6.5" stroke="#333"/><rect x="7.6" y="9" width="1.2" height="1.2" fill="#333"/><rect x="7.6" y="11" width="1.2" height="1.2" fill="#333"/></svg>
<div class="t ui" style="left:167px;top:504.84px;font-size:12px;color:#111;font-weight:normal;letter-spacing:-0.1px">Initial tasks</div>
<div style="position:absolute;left:0px;top:521px;width:331px;height:20px;background:#BEC2CB"></div>
<svg style="position:absolute;left:172px;top:524px;" width="11" height="14" viewBox="0 0 11 14"><rect x="0.5" y="0.5" width="10" height="13" fill="#C6EEF8" stroke="#4A68C4"/><rect x="1" y="1" width="9" height="2.5" fill="#FFFFFF"/><path d="M1 3.5 H10 M1 7.5 H10" stroke="#4A68C4"/><path d="M2 5.5 H6.5" stroke="#F03C3C"/><rect x="7.6" y="5" width="1.2" height="1.2" fill="#F03C3C"/><path d="M2 9.5 H6.5 M2 11.5 H6.5" stroke="#333"/><rect x="7.6" y="9" width="1.2" height="1.2" fill="#333"/><rect x="7.6" y="11" width="1.2" height="1.2" fill="#333"/></svg>
<div class="t ui" style="left:190px;top:524.84px;font-size:12px;color:#111;font-weight:normal;letter-spacing:-0.1px">Specify the type of element to work on</div>
<svg style="position:absolute;left:172px;top:544px;" width="11" height="14" viewBox="0 0 11 14"><rect x="0.5" y="0.5" width="10" height="13" fill="#C6EEF8" stroke="#4A68C4"/><rect x="1" y="1" width="9" height="2.5" fill="#FFFFFF"/><path d="M1 3.5 H10 M1 7.5 H10" stroke="#4A68C4"/><path d="M2 5.5 H6.5" stroke="#F03C3C"/><rect x="7.6" y="5" width="1.2" height="1.2" fill="#F03C3C"/><path d="M2 9.5 H6.5 M2 11.5 H6.5" stroke="#333"/><rect x="7.6" y="9" width="1.2" height="1.2" fill="#333"/><rect x="7.6" y="11" width="1.2" height="1.2" fill="#333"/></svg>
<div class="t ui" style="left:190px;top:544.84px;font-size:12px;color:#111;font-weight:normal;letter-spacing:-0.1px">Select the Package to work in</div>
<svg style="position:absolute;left:172px;top:564px;" width="11" height="14" viewBox="0 0 11 14"><rect x="0.5" y="0.5" width="10" height="13" fill="#C6EEF8" stroke="#4A68C4"/><rect x="1" y="1" width="9" height="2.5" fill="#FFFFFF"/><path d="M1 3.5 H10 M1 7.5 H10" stroke="#4A68C4"/><path d="M2 5.5 H6.5" stroke="#F03C3C"/><rect x="7.6" y="5" width="1.2" height="1.2" fill="#F03C3C"/><path d="M2 9.5 H6.5 M2 11.5 H6.5" stroke="#333"/><rect x="7.6" y="9" width="1.2" height="1.2" fill="#333"/><rect x="7.6" y="11" width="1.2" height="1.2" fill="#333"/></svg>
<div class="t ui" style="left:190px;top:564.84px;font-size:12px;color:#111;font-weight:normal;letter-spacing:-0.1px">Set up List Header and Filter bars</div>
<svg style="position:absolute;left:172px;top:584px;" width="11" height="14" viewBox="0 0 11 14"><rect x="0.5" y="0.5" width="10" height="13" fill="#C6EEF8" stroke="#4A68C4"/><rect x="1" y="1" width="9" height="2.5" fill="#FFFFFF"/><path d="M1 3.5 H10 M1 7.5 H10" stroke="#4A68C4"/><path d="M2 5.5 H6.5" stroke="#F03C3C"/><rect x="7.6" y="5" width="1.2" height="1.2" fill="#F03C3C"/><path d="M2 9.5 H6.5 M2 11.5 H6.5" stroke="#333"/><rect x="7.6" y="9" width="1.2" height="1.2" fill="#333"/><rect x="7.6" y="11" width="1.2" height="1.2" fill="#333"/></svg>
<div class="t ui" style="left:190px;top:584.84px;font-size:12px;color:#111;font-weight:normal;letter-spacing:-0.1px">Configure the display</div>
<svg style="position:absolute;left:125px;top:607px;" width="9" height="9" viewBox="0 0 9 9"><rect x="0.5" y="0.5" width="8" height="8" rx="1" fill="#F4F4F4" stroke="#8E8E8E"/><path d="M2 4.5 H7" stroke="#2A4A9A" stroke-width="1.2"/><path d="M4.5 2 V7" stroke="#2A4A9A" stroke-width="1.2"/></svg>
<svg style="position:absolute;left:149px;top:604px;" width="11" height="14" viewBox="0 0 11 14"><rect x="0.5" y="0.5" width="10" height="13" fill="#C6EEF8" stroke="#4A68C4"/><rect x="1" y="1" width="9" height="2.5" fill="#FFFFFF"/><path d="M1 3.5 H10 M1 7.5 H10" stroke="#4A68C4"/><path d="M2 5.5 H6.5" stroke="#F03C3C"/><rect x="7.6" y="5" width="1.2" height="1.2" fill="#F03C3C"/><path d="M2 9.5 H6.5 M2 11.5 H6.5" stroke="#333"/><rect x="7.6" y="9" width="1.2" height="1.2" fill="#333"/><rect x="7.6" y="11" width="1.2" height="1.2" fill="#333"/></svg>
<div class="t ui" style="left:167px;top:604.84px;font-size:12px;color:#111;font-weight:normal;letter-spacing:-0.1px">Organize elements</div>
<svg style="position:absolute;left:125px;top:627px;" width="9" height="9" viewBox="0 0 9 9"><rect x="0.5" y="0.5" width="8" height="8" rx="1" fill="#F4F4F4" stroke="#8E8E8E"/><path d="M2 4.5 H7" stroke="#2A4A9A" stroke-width="1.2"/><path d="M4.5 2 V7" stroke="#2A4A9A" stroke-width="1.2"/></svg>
<svg style="position:absolute;left:149px;top:624px;" width="11" height="14" viewBox="0 0 11 14"><rect x="0.5" y="0.5" width="10" height="13" fill="#C6EEF8" stroke="#4A68C4"/><rect x="1" y="1" width="9" height="2.5" fill="#FFFFFF"/><path d="M1 3.5 H10 M1 7.5 H10" stroke="#4A68C4"/><path d="M2 5.5 H6.5" stroke="#F03C3C"/><rect x="7.6" y="5" width="1.2" height="1.2" fill="#F03C3C"/><path d="M2 9.5 H6.5 M2 11.5 H6.5" stroke="#333"/><rect x="7.6" y="9" width="1.2" height="1.2" fill="#333"/><rect x="7.6" y="11" width="1.2" height="1.2" fill="#333"/></svg>
<div class="t ui" style="left:167px;top:624.84px;font-size:12px;color:#111;font-weight:normal;letter-spacing:-0.1px">Review the elements</div>
<svg style="position:absolute;left:149px;top:644px;" width="11" height="14" viewBox="0 0 11 14"><rect x="0.5" y="0.5" width="10" height="13" fill="#C6EEF8" stroke="#4A68C4"/><rect x="1" y="1" width="9" height="2.5" fill="#FFFFFF"/><path d="M1 3.5 H10 M1 7.5 H10" stroke="#4A68C4"/><path d="M2 5.5 H6.5" stroke="#F03C3C"/><rect x="7.6" y="5" width="1.2" height="1.2" fill="#F03C3C"/><path d="M2 9.5 H6.5 M2 11.5 H6.5" stroke="#333"/><rect x="7.6" y="9" width="1.2" height="1.2" fill="#333"/><rect x="7.6" y="11" width="1.2" height="1.2" fill="#333"/></svg>
<div class="t ui" style="left:167px;top:644.84px;font-size:12px;color:#111;font-weight:normal;letter-spacing:-0.1px">Notes</div>
<svg style="position:absolute;left:79px;top:667px;" width="9" height="9" viewBox="0 0 9 9"><rect x="0.5" y="0.5" width="8" height="8" rx="1" fill="#F4F4F4" stroke="#8E8E8E"/><path d="M2 4.5 H7" stroke="#2A4A9A" stroke-width="1.2"/><path d="M4.5 2 V7" stroke="#2A4A9A" stroke-width="1.2"/></svg>
<svg style="position:absolute;left:100px;top:663px;" width="16" height="15" viewBox="0 0 16 15"><path d="M0.5 2.5 Q0.5 1 2 1 H5 Q6 1 6.5 2.5 H14.5 V13.5 H0.5Z" fill="#F3CDA8" stroke="#D8A020"/><path d="M0.5 13.5 H14.5 V2.5" fill="none" stroke="#B87018"/></svg>
<div class="t ui" style="left:121px;top:664.84px;font-size:12px;color:#111;font-weight:normal;letter-spacing:-0.1px">Traceability</div>
<svg style="position:absolute;left:79px;top:687px;" width="9" height="9" viewBox="0 0 9 9"><rect x="0.5" y="0.5" width="8" height="8" rx="1" fill="#F4F4F4" stroke="#8E8E8E"/><path d="M2 4.5 H7" stroke="#2A4A9A" stroke-width="1.2"/><path d="M4.5 2 V7" stroke="#2A4A9A" stroke-width="1.2"/></svg>
<svg style="position:absolute;left:100px;top:683px;" width="16" height="15" viewBox="0 0 16 15"><path d="M0.5 2.5 Q0.5 1 2 1 H5 Q6 1 6.5 2.5 H14.5 V13.5 H0.5Z" fill="#F3CDA8" stroke="#D8A020"/><path d="M0.5 13.5 H14.5 V2.5" fill="none" stroke="#B87018"/></svg>
<div class="t ui" style="left:121px;top:684.84px;font-size:12px;color:#111;font-weight:normal;letter-spacing:-0.1px">Reviewing Elements</div>
<svg style="position:absolute;left:79px;top:707px;" width="9" height="9" viewBox="0 0 9 9"><rect x="0.5" y="0.5" width="8" height="8" rx="1" fill="#F4F4F4" stroke="#8E8E8E"/><path d="M2 4.5 H7" stroke="#2A4A9A" stroke-width="1.2"/><path d="M4.5 2 V7" stroke="#2A4A9A" stroke-width="1.2"/></svg>
<svg style="position:absolute;left:100px;top:703px;" width="16" height="15" viewBox="0 0 16 15"><path d="M0.5 2.5 Q0.5 1 2 1 H5 Q6 1 6.5 2.5 H14.5 V13.5 H0.5Z" fill="#F3CDA8" stroke="#D8A020"/><path d="M0.5 13.5 H14.5 V2.5" fill="none" stroke="#B87018"/></svg>
<div class="t ui" style="left:121px;top:704.84px;font-size:12px;color:#111;font-weight:normal;letter-spacing:-0.1px">Managing Changes</div>
<svg style="position:absolute;left:79px;top:727px;" width="9" height="9" viewBox="0 0 9 9"><rect x="0.5" y="0.5" width="8" height="8" rx="1" fill="#F4F4F4" stroke="#8E8E8E"/><path d="M2 4.5 H7" stroke="#2A4A9A" stroke-width="1.2"/><path d="M4.5 2 V7" stroke="#2A4A9A" stroke-width="1.2"/></svg>
<svg style="position:absolute;left:100px;top:723px;" width="16" height="15" viewBox="0 0 16 15"><path d="M0.5 2.5 Q0.5 1 2 1 H5 Q6 1 6.5 2.5 H14.5 V13.5 H0.5Z" fill="#F3CDA8" stroke="#D8A020"/><path d="M0.5 13.5 H14.5 V2.5" fill="none" stroke="#B87018"/></svg>
<div class="t ui" style="left:121px;top:724.84px;font-size:12px;color:#111;font-weight:normal;letter-spacing:-0.1px">Reporting</div>
<svg style="position:absolute;left:79px;top:747px;" width="9" height="9" viewBox="0 0 9 9"><rect x="0.5" y="0.5" width="8" height="8" rx="1" fill="#F4F4F4" stroke="#8E8E8E"/><path d="M2 4.5 H7" stroke="#2A4A9A" stroke-width="1.2"/><path d="M4.5 2 V7" stroke="#2A4A9A" stroke-width="1.2"/></svg>
<svg style="position:absolute;left:100px;top:743px;" width="16" height="15" viewBox="0 0 16 15"><path d="M0.5 2.5 Q0.5 1 2 1 H5 Q6 1 6.5 2.5 H14.5 V13.5 H0.5Z" fill="#F3CDA8" stroke="#D8A020"/><path d="M0.5 13.5 H14.5 V2.5" fill="none" stroke="#B87018"/></svg>
<div class="t ui" style="left:121px;top:744.84px;font-size:12px;color:#111;font-weight:normal;letter-spacing:-0.1px">Specification Manager Configuration</div>
<svg style="position:absolute;left:79px;top:767px;" width="9" height="9" viewBox="0 0 9 9"><rect x="0.5" y="0.5" width="8" height="8" rx="1" fill="#F4F4F4" stroke="#8E8E8E"/><path d="M2 4.5 H7" stroke="#2A4A9A" stroke-width="1.2"/><path d="M4.5 2 V7" stroke="#2A4A9A" stroke-width="1.2"/></svg>
<svg style="position:absolute;left:103px;top:764px;" width="11" height="14" viewBox="0 0 11 14"><rect x="0.5" y="0.5" width="10" height="13" fill="#C6EEF8" stroke="#4A68C4"/><rect x="1" y="1" width="9" height="2.5" fill="#FFFFFF"/><path d="M1 3.5 H10 M1 7.5 H10" stroke="#4A68C4"/><path d="M2 5.5 H6.5" stroke="#F03C3C"/><rect x="7.6" y="5" width="1.2" height="1.2" fill="#F03C3C"/><path d="M2 9.5 H6.5 M2 11.5 H6.5" stroke="#333"/><rect x="7.6" y="9" width="1.2" height="1.2" fill="#333"/><rect x="7.6" y="11" width="1.2" height="1.2" fill="#333"/></svg>
<div class="t ui" style="left:121px;top:764.84px;font-size:12px;color:#111;font-weight:normal;letter-spacing:-0.1px">The Specification Manager</div>
<svg style="position:absolute;left:56px;top:787px;" width="9" height="9" viewBox="0 0 9 9"><rect x="0.5" y="0.5" width="8" height="8" rx="1" fill="#F4F4F4" stroke="#8E8E8E"/><path d="M2 4.5 H7" stroke="#2A4A9A" stroke-width="1.2"/><path d="M4.5 2 V7" stroke="#2A4A9A" stroke-width="1.2"/></svg>
<svg style="position:absolute;left:77px;top:783px;" width="16" height="15" viewBox="0 0 16 15"><path d="M0.5 2.5 Q0.5 1 2 1 H5 Q6 1 6.5 2.5 H14.5 V13.5 H0.5Z" fill="#F3CDA8" stroke="#D8A020"/><path d="M0.5 13.5 H14.5 V2.5" fill="none" stroke="#B87018"/></svg>
<div class="t ui" style="left:98px;top:784.84px;font-size:12px;color:#111;font-weight:normal;letter-spacing:-0.1px">Wireframe Modeling</div>
<svg style="position:absolute;left:56px;top:807px;" width="9" height="9" viewBox="0 0 9 9"><rect x="0.5" y="0.5" width="8" height="8" rx="1" fill="#F4F4F4" stroke="#8E8E8E"/><path d="M2 4.5 H7" stroke="#2A4A9A" stroke-width="1.2"/><path d="M4.5 2 V7" stroke="#2A4A9A" stroke-width="1.2"/></svg>
<svg style="position:absolute;left:77px;top:803px;" width="16" height="15" viewBox="0 0 16 15"><path d="M0.5 2.5 Q0.5 1 2 1 H5 Q6 1 6.5 2.5 H14.5 V13.5 H0.5Z" fill="#F3CDA8" stroke="#D8A020"/><path d="M0.5 13.5 H14.5 V2.5" fill="none" stroke="#B87018"/></svg>
<div class="t ui" style="left:98px;top:804.84px;font-size:12px;color:#111;font-weight:normal;letter-spacing:-0.1px">Model Navigation</div>
<svg style="position:absolute;left:56px;top:827px;" width="9" height="9" viewBox="0 0 9 9"><rect x="0.5" y="0.5" width="8" height="8" rx="1" fill="#F4F4F4" stroke="#8E8E8E"/><path d="M2 4.5 H7" stroke="#2A4A9A" stroke-width="1.2"/><path d="M4.5 2 V7" stroke="#2A4A9A" stroke-width="1.2"/></svg>
<svg style="position:absolute;left:77px;top:823px;" width="16" height="15" viewBox="0 0 16 15"><path d="M0.5 2.5 Q0.5 1 2 1 H5 Q6 1 6.5 2.5 H14.5 V13.5 H0.5Z" fill="#F3CDA8" stroke="#D8A020"/><path d="M0.5 13.5 H14.5 V2.5" fill="none" stroke="#B87018"/></svg>
<div class="t ui" style="left:98px;top:824.84px;font-size:12px;color:#111;font-weight:normal;letter-spacing:-0.1px">UML Models</div>
<svg style="position:absolute;left:56px;top:847px;" width="9" height="9" viewBox="0 0 9 9"><rect x="0.5" y="0.5" width="8" height="8" rx="1" fill="#F4F4F4" stroke="#8E8E8E"/><path d="M2 4.5 H7" stroke="#2A4A9A" stroke-width="1.2"/><path d="M4.5 2 V7" stroke="#2A4A9A" stroke-width="1.2"/></svg>
<svg style="position:absolute;left:77px;top:843px;" width="16" height="15" viewBox="0 0 16 15"><path d="M0.5 2.5 Q0.5 1 2 1 H5 Q6 1 6.5 2.5 H14.5 V13.5 H0.5Z" fill="#F3CDA8" stroke="#D8A020"/><path d="M0.5 13.5 H14.5 V2.5" fill="none" stroke="#B87018"/></svg>
<div class="t ui" style="left:98px;top:844.84px;font-size:12px;color:#111;font-weight:normal;letter-spacing:-0.1px">Extending UML</div>
<svg style="position:absolute;left:56px;top:867px;" width="9" height="9" viewBox="0 0 9 9"><rect x="0.5" y="0.5" width="8" height="8" rx="1" fill="#F4F4F4" stroke="#8E8E8E"/><path d="M2 4.5 H7" stroke="#2A4A9A" stroke-width="1.2"/><path d="M4.5 2 V7" stroke="#2A4A9A" stroke-width="1.2"/></svg>
<svg style="position:absolute;left:77px;top:863px;" width="16" height="15" viewBox="0 0 16 15"><path d="M0.5 2.5 Q0.5 1 2 1 H5 Q6 1 6.5 2.5 H14.5 V13.5 H0.5Z" fill="#F3CDA8" stroke="#D8A020"/><path d="M0.5 13.5 H14.5 V2.5" fill="none" stroke="#B87018"/></svg>
<div class="t ui" style="left:98px;top:864.84px;font-size:12px;color:#111;font-weight:normal;letter-spacing:-0.1px">Model Validation</div>
<svg style="position:absolute;left:56px;top:887px;" width="9" height="9" viewBox="0 0 9 9"><rect x="0.5" y="0.5" width="8" height="8" rx="1" fill="#F4F4F4" stroke="#8E8E8E"/><path d="M2 4.5 H7" stroke="#2A4A9A" stroke-width="1.2"/><path d="M4.5 2 V7" stroke="#2A4A9A" stroke-width="1.2"/></svg>
<svg style="position:absolute;left:77px;top:883px;" width="16" height="15" viewBox="0 0 16 15"><path d="M0.5 2.5 Q0.5 1 2 1 H5 Q6 1 6.5 2.5 H14.5 V13.5 H0.5Z" fill="#F3CDA8" stroke="#D8A020"/><path d="M0.5 13.5 H14.5 V2.5" fill="none" stroke="#B87018"/></svg>
<div class="t ui" style="left:98px;top:884.84px;font-size:12px;color:#111;font-weight:normal;letter-spacing:-0.1px">SPEM</div>
<svg style="position:absolute;left:56px;top:907px;" width="9" height="9" viewBox="0 0 9 9"><rect x="0.5" y="0.5" width="8" height="8" rx="1" fill="#F4F4F4" stroke="#8E8E8E"/><path d="M2 4.5 H7" stroke="#2A4A9A" stroke-width="1.2"/><path d="M4.5 2 V7" stroke="#2A4A9A" stroke-width="1.2"/></svg>
<svg style="position:absolute;left:77px;top:903px;" width="16" height="15" viewBox="0 0 16 15"><path d="M0.5 2.5 Q0.5 1 2 1 H5 Q6 1 6.5 2.5 H14.5 V13.5 H0.5Z" fill="#F3CDA8" stroke="#D8A020"/><path d="M0.5 13.5 H14.5 V2.5" fill="none" stroke="#B87018"/></svg>
<div class="t ui" style="left:98px;top:904.84px;font-size:12px;color:#111;font-weight:normal;letter-spacing:-0.1px">Domain Models</div>
<svg style="position:absolute;left:56px;top:927px;" width="9" height="9" viewBox="0 0 9 9"><rect x="0.5" y="0.5" width="8" height="8" rx="1" fill="#F4F4F4" stroke="#8E8E8E"/><path d="M2 4.5 H7" stroke="#2A4A9A" stroke-width="1.2"/><path d="M4.5 2 V7" stroke="#2A4A9A" stroke-width="1.2"/></svg>
<svg style="position:absolute;left:77px;top:923px;" width="16" height="15" viewBox="0 0 16 15"><path d="M0.5 2.5 Q0.5 1 2 1 H5 Q6 1 6.5 2.5 H14.5 V13.5 H0.5Z" fill="#F3CDA8" stroke="#D8A020"/><path d="M0.5 13.5 H14.5 V2.5" fill="none" stroke="#B87018"/></svg>
<div class="t ui" style="left:98px;top:924.84px;font-size:12px;color:#111;font-weight:normal;letter-spacing:-0.1px">Using MDG Technologies</div>
<svg style="position:absolute;left:56px;top:947px;" width="9" height="9" viewBox="0 0 9 9"><rect x="0.5" y="0.5" width="8" height="8" rx="1" fill="#F4F4F4" stroke="#8E8E8E"/><path d="M2 4.5 H7" stroke="#2A4A9A" stroke-width="1.2"/><path d="M4.5 2 V7" stroke="#2A4A9A" stroke-width="1.2"/></svg>
<svg style="position:absolute;left:77px;top:943px;" width="16" height="15" viewBox="0 0 16 15"><path d="M0.5 2.5 Q0.5 1 2 1 H5 Q6 1 6.5 2.5 H14.5 V13.5 H0.5Z" fill="#F3CDA8" stroke="#D8A020"/><path d="M0.5 13.5 H14.5 V2.5" fill="none" stroke="#B87018"/></svg>
<div class="t ui" style="left:98px;top:944.84px;font-size:12px;color:#111;font-weight:normal;letter-spacing:-0.1px">MDG Technology SDK</div>
<svg style="position:absolute;left:56px;top:967px;" width="9" height="9" viewBox="0 0 9 9"><rect x="0.5" y="0.5" width="8" height="8" rx="1" fill="#F4F4F4" stroke="#8E8E8E"/><path d="M2 4.5 H7" stroke="#2A4A9A" stroke-width="1.2"/><path d="M4.5 2 V7" stroke="#2A4A9A" stroke-width="1.2"/></svg>
<svg style="position:absolute;left:77px;top:963px;" width="16" height="15" viewBox="0 0 16 15"><path d="M0.5 2.5 Q0.5 1 2 1 H5 Q6 1 6.5 2.5 H14.5 V13.5 H0.5Z" fill="#F3CDA8" stroke="#D8A020"/><path d="M0.5 13.5 H14.5 V2.5" fill="none" stroke="#B87018"/></svg>
<div class="t ui" style="left:98px;top:964.84px;font-size:12px;color:#111;font-weight:normal;letter-spacing:-0.1px">Reference Data</div>
<svg style="position:absolute;left:56px;top:987px;" width="9" height="9" viewBox="0 0 9 9"><rect x="0.5" y="0.5" width="8" height="8" rx="1" fill="#F4F4F4" stroke="#8E8E8E"/><path d="M2 4.5 H7" stroke="#2A4A9A" stroke-width="1.2"/><path d="M4.5 2 V7" stroke="#2A4A9A" stroke-width="1.2"/></svg>
<svg style="position:absolute;left:80px;top:984px;" width="11" height="14" viewBox="0 0 11 14"><rect x="0.5" y="0.5" width="10" height="13" fill="#C6EEF8" stroke="#4A68C4"/><rect x="1" y="1" width="9" height="2.5" fill="#FFFFFF"/><path d="M1 3.5 H10 M1 7.5 H10" stroke="#4A68C4"/><path d="M2 5.5 H6.5" stroke="#F03C3C"/><rect x="7.6" y="5" width="1.2" height="1.2" fill="#F03C3C"/><path d="M2 9.5 H6.5 M2 11.5 H6.5" stroke="#333"/><rect x="7.6" y="9" width="1.2" height="1.2" fill="#333"/><rect x="7.6" y="11" width="1.2" height="1.2" fill="#333"/></svg>
<div class="t ui" style="left:98px;top:984.84px;font-size:12px;color:#111;font-weight:normal;letter-spacing:-0.1px">Building Models</div>
</div>
<div style="position:absolute;left:0px;top:1002px;width:349px;height:24px;background:#4D6082"></div>
<div style="position:absolute;left:0px;top:1002px;width:108px;height:23px;background:#FAFBFC;border-top:1px solid #C3C9D6;box-sizing:border-box"></div>
<svg style="position:absolute;left:4px;top:1005px;" width="16" height="17" viewBox="0 0 16 17"><path d="M0.5 0.5 H5 L6 2 H9.5 V7 H0.5Z" fill="#E8E070" stroke="#8A8A30"/><rect x="4.5" y="4.5" width="10" height="11" fill="#E8ECF8" stroke="#303878"/><rect x="7" y="8" width="5" height="5" fill="none" stroke="#303878"/></svg>
<div class="t ui" style="left:22px;top:1006.59px;font-size:11.5px;color:#24509C;font-weight:normal;">Project Browser</div>
<svg style="position:absolute;left:113px;top:1005px;" width="16" height="16" viewBox="0 0 16 16"><path d="M1 7 L8 1 L15 7 L8 13Z" fill="#E8D040" stroke="#706020"/><path d="M5 4 L12 10 M7 3 L14 9" stroke="#fff" stroke-width="1"/><rect x="9" y="10" width="5" height="5" fill="#222"/></svg>
<div class="t " style="left:131px;top:1007.09px;font-size:11.5px;color:#E4E8F0;font-weight:normal;letter-spacing:-0.3px">Resources</div>
<div style="position:absolute;left:0px;top:1026px;width:1920px;height:23px;background:#007ACC"></div>
<div class="t " style="left:3px;top:1031.59px;font-size:11.5px;color:#FFFFFF;font-weight:normal;">Class:Specify the type of element to work on</div>
<div style="position:absolute;left:353px;top:73px;width:1199px;height:28px;background:#D6DBE9;border-top:1px solid #A9B1C2;box-sizing:border-box"></div>
<div style="position:absolute;left:353px;top:73px;width:1px;height:953px;background:#9AA3B5"></div>
<div style="position:absolute;left:353px;top:100px;width:1199px;height:1px;background:#A9B1C2"></div>
<svg style="position:absolute;left:360px;top:83px;" width="10" height="9" viewBox="0 0 10 9"><path d="M4.5 0.5 L0.8 4.5 L4.5 8.5 M9 0.5 L5.3 4.5 L9 8.5" fill="none" stroke="#111" stroke-width="1.3"/></svg>
<div class="t " style="left:415px;top:81.89px;font-size:11.5px;color:#8A8F99;font-weight:normal;letter-spacing:-0.35px">Specification Manager::&nbsp; Package: "Using the Specification Manager"&nbsp; [ Requirement ]</div>
<svg style="position:absolute;left:1485px;top:83px;" width="10" height="10" viewBox="0 0 10 10"><path d="M0.5 5 L4.5 1 L8.5 5 M0.5 9 L4.5 5 L8.5 9" fill="none" stroke="#999" stroke-width="1.1"/></svg>
<svg style="position:absolute;left:1515px;top:86px;" width="8" height="5" viewBox="0 0 8 5"><path d="M0 0 H8 L4 4.5Z" fill="#000"/></svg>
<svg style="position:absolute;left:1536px;top:85px;" width="8" height="8" viewBox="0 0 8 8"><path d="M0.5 0.5 L7.5 7.5 M7.5 0.5 L0.5 7.5" stroke="#000" stroke-width="1.8"/></svg>
<div style="position:absolute;left:354px;top:101px;width:1198px;height:25px;background:#CFD6E5"></div>
<div style="position:absolute;left:354px;top:125px;width:1198px;height:1px;background:#B9C0CE"></div>
<svg style="position:absolute;left:357px;top:104px;" width="16" height="16" viewBox="0 0 16 16"><circle cx="8" cy="8" r="7.8" fill="#0F78C6"/><path d="M11.5 8 H4.8 M7.8 5 L4.8 8 L7.8 11" fill="none" stroke="#fff" stroke-width="2" stroke-linecap="round" stroke-linejoin="round"/></svg>
<svg style="position:absolute;left:379px;top:104px;" width="16" height="16" viewBox="0 0 16 16"><circle cx="8" cy="8" r="7.8" fill="#6FB3E0"/><path d="M4.5 8 H11.2 M8.2 5 L11.2 8 L8.2 11" fill="none" stroke="#fff" stroke-width="2" stroke-linecap="round" stroke-linejoin="round"/></svg>
<div style="position:absolute;left:401px;top:102px;width:808px;height:21px;background:#FDFDFE"></div>
<svg style="position:absolute;left:406.5px;top:109px;" width="5" height="8" viewBox="0 0 5 8"><path d="M0 0 L4.5 3.75 L0 7.5Z" fill="#1B2536"/></svg>
<div class="t ui" style="left:421px;top:106.09px;font-size:11.5px;color:#1B2536;font-weight:normal;letter-spacing:-0.45px">/</div>
<svg style="position:absolute;left:439.5px;top:109px;" width="5" height="8" viewBox="0 0 5 8"><path d="M0 0 L4.5 3.75 L0 7.5Z" fill="#1B2536"/></svg>
<div class="t ui" style="left:453px;top:106.09px;font-size:11.5px;color:#1B2536;font-weight:normal;letter-spacing:-0.45px">Help System</div>
<svg style="position:absolute;left:522.5px;top:109px;" width="5" height="8" viewBox="0 0 5 8"><path d="M0 0 L4.5 3.75 L0 7.5Z" fill="#1B2536"/></svg>
<div class="t ui" style="left:535px;top:106.09px;font-size:11.5px;color:#1B2536;font-weight:normal;letter-spacing:-0.45px">Help System</div>
<svg style="position:absolute;left:604.5px;top:109px;" width="5" height="8" viewBox="0 0 5 8"><path d="M0 0 L4.5 3.75 L0 7.5Z" fill="#1B2536"/></svg>
<div class="t ui" style="left:617px;top:106.09px;font-size:11.5px;color:#1B2536;font-weight:normal;letter-spacing:-0.45px">Building Models</div>
<svg style="position:absolute;left:701.5px;top:109px;" width="5" height="8" viewBox="0 0 5 8"><path d="M0 0 L4.5 3.75 L0 7.5Z" fill="#1B2536"/></svg>
<div class="t ui" style="left:714px;top:106.09px;font-size:11.5px;color:#1B2536;font-weight:normal;letter-spacing:-0.45px">The Specification Manager</div>
<svg style="position:absolute;left:852.5px;top:109px;" width="5" height="8" viewBox="0 0 5 8"><path d="M0 0 L4.5 3.75 L0 7.5Z" fill="#1B2536"/></svg>
<div class="t ui" style="left:865px;top:106.09px;font-size:11.5px;color:#1B2536;font-weight:normal;letter-spacing:-0.45px">Using the Specification Manager</div>
<svg style="position:absolute;left:1029.5px;top:109px;" width="5" height="8" viewBox="0 0 5 8"><path d="M0 0 L4.5 3.75 L0 7.5Z" fill="#1B2536"/></svg>
<div style="position:absolute;left:1214px;top:101px;width:246px;height:22px;background:#FDFDFE;border:1px solid #8E9AB0;box-sizing:border-box"></div>
<div class="t " style="left:1216px;top:106.09px;font-size:11.5px;color:#7A7A7A;font-weight:normal;letter-spacing:-0.3px">Find Package</div>
<svg style="position:absolute;left:1466px;top:104px;" width="16" height="16" viewBox="0 0 16 16"><path d="M1.5 14.5 L6 10" stroke="#C8A070" stroke-width="2.6" stroke-linecap="round"/><circle cx="10" cy="6" r="5" fill="#CDE4F7" stroke="#8C82D8" stroke-width="1.3"/></svg>
<div style="position:absolute;left:1486px;top:101px;width:33px;height:22px;background:#FFEE99"></div>
<div style="position:absolute;left:1509px;top:101px;width:1px;height:22px;background:#E8B830"></div>
<svg style="position:absolute;left:1491px;top:104px;" width="15" height="15" viewBox="0 0 15 15"><rect x="0" y="0" width="3" height="3" fill="#404040"/><rect x="4" y="0" width="3" height="3" fill="#404040"/><rect x="8" y="0" width="3" height="3" fill="#404040"/><rect x="12" y="0" width="3" height="3" fill="#404040"/><rect x="0" y="4" width="3" height="3" fill="#404040"/><rect x="4" y="4" width="3" height="3" fill="#404040"/><rect x="0" y="8" width="3" height="3" fill="#404040"/><rect x="0" y="12" width="3" height="3" fill="#404040"/></svg>
<svg style="position:absolute;left:1512px;top:111px;" width="5" height="3" viewBox="0 0 5 3"><path d="M0 0 H5 L2.5 3Z" fill="#777"/></svg>
<div style="position:absolute;left:1524px;top:102px;width:1px;height:20px;background:#B5BDCC"></div>
<svg style="position:absolute;left:1531px;top:105px;" width="16" height="15" viewBox="0 0 16 15"><rect x="0" y="0" width="16" height="2.6" fill="#666"/><rect x="0" y="4" width="16" height="2.6" fill="#666"/><rect x="0" y="8" width="16" height="2.6" fill="#666"/><rect x="0" y="12" width="16" height="2.6" fill="#666"/></svg>
<div style="position:absolute;left:354px;top:126px;width:1198px;height:876px;background:#FCFCFD"></div>
<div style="position:absolute;left:1532px;top:126px;width:17px;height:876px;background:#D3D9E6"></div>
<div style="position:absolute;left:1536px;top:133px;width:9px;height:256px;background:#BCC0C9"></div>
<svg style="position:absolute;left:1535px;top:991px;" width="10" height="5" viewBox="0 0 10 5"><path d="M0 0 H10 L5 5Z" fill="#6B6B6B"/></svg>
<div style="position:absolute;left:356px;top:444px;width:5px;height:153px;background:linear-gradient(180deg,#D3D7E6,#9BA6CC 50%,#6C7EB2)"></div>
<div style="position:absolute;left:361px;top:444px;width:3px;height:153px;background:linear-gradient(90deg,#E6E7EA,#FCFCFD)"></div>
<div style="position:absolute;left:0;top:0;width:1532px;height:1002px;overflow:hidden;clip-path:inset(126px 0 0 354px)">
<svg style="position:absolute;left:376px;top:140px;" width="7" height="7" viewBox="0 0 7 7"><path d="M7 0 V7 H0Z" fill="#808A9C"/></svg>
<div class="t " style="left:401px;top:137.09px;font-size:22px;color:#1E2A3C;font-weight:normal;letter-spacing:-0.05px">Using the <span style="color:#5858A0;text-decoration:underline;text-decoration-color:#6262A8;text-underline-offset:2px;text-decoration-thickness:1px">Specification Manager</span></div>
<div class="t " style="left:401px;top:168.83px;font-size:14px;color:#111;font-weight:normal;letter-spacing:0px">When you begin working in the <span style="text-decoration:underline;text-decoration-color:#6262A8;text-underline-offset:2px;text-decoration-thickness:1px">Specification Manager</span>, there are three general areas of activity you work through:</div>
<div style="position:absolute;left:402px;top:198.5px;width:5px;height:5px;background:#111;border-radius:50%"></div>
<div class="t " style="left:425px;top:191.83px;font-size:14px;color:#111;font-weight:normal;letter-spacing:0px">Setting up the <span style="text-decoration:underline;text-decoration-color:#6262A8;text-underline-offset:2px;text-decoration-thickness:1px">Specification Manager</span> to suit your work requirements</div>
<div style="position:absolute;left:402px;top:216.5px;width:5px;height:5px;background:#111;border-radius:50%"></div>
<div class="t " style="left:425px;top:209.83px;font-size:14px;color:#111;font-weight:normal;letter-spacing:0px">Creating and/or organizing the elements in the View</div>
<div style="position:absolute;left:402px;top:234.5px;width:5px;height:5px;background:#111;border-radius:50%"></div>
<div class="t " style="left:425px;top:227.83px;font-size:14px;color:#111;font-weight:normal;letter-spacing:0.07px">Performing whatever work you need to do on the elements</div>
<div class="t " style="left:401px;top:251.73px;font-size:14px;color:#111;font-weight:normal;letter-spacing:-0.06px">The <span style="text-decoration:underline;text-decoration-color:#6262A8;text-underline-offset:2px;text-decoration-thickness:1px">Specification Manager</span> is extremely versatile, and you can use it very simply to create a set of basic elements or at varying levels of sophistication to manage the</div>
<div class="t " style="left:401px;top:269.33px;font-size:14px;color:#111;font-weight:normal;letter-spacing:0px">elements in your project, as you need.</div>
<div class="t " style="left:423.5px;top:314.22px;font-size:16px;color:#1E2A3C;font-weight:normal;letter-spacing:-0.4px">Access</div>
<div class="t " style="left:426.4px;top:340.83px;font-size:14px;color:#111;font-weight:normal;letter-spacing:-0.15px">Package | View as Requirement List</div>
<div class="t " style="left:426.4px;top:363.83px;font-size:14px;color:#111;font-weight:normal;letter-spacing:0px">Tools | <span style="text-decoration:underline;text-decoration-color:#6262A8;text-underline-offset:2px;text-decoration-thickness:1px">Specification Manager</span></div>
<svg style="position:absolute;left:401px;top:412px;" width="6" height="6" viewBox="0 0 6 6"><path d="M6 0 V6 H0Z" fill="#808A9C"/></svg>
<div class="t " style="left:423.5px;top:408.07px;font-size:16.5px;color:#1E2A3C;font-weight:normal;letter-spacing:0px">Initial tasks</div>
<div class="t " style="left:448px;top:453.87px;font-size:16.5px;color:#1E2A3C;font-weight:normal;letter-spacing:0.1px">Specify the type of element to work on</div>
<div style="position:absolute;left:443px;top:478px;width:2px;height:107px;background:#D5D9E6"></div>
<div class="t " style="left:451px;top:480.33px;font-size:14px;color:#111;font-weight:normal;letter-spacing:0px">Either:</div>
<div style="position:absolute;left:452px;top:510px;width:5px;height:5px;background:#111;border-radius:50%"></div>
<div class="t " style="left:475px;top:503.33px;font-size:14px;color:#111;font-weight:normal;letter-spacing:0.18px">Work with the default (all element types) or</div>
<div style="position:absolute;left:452px;top:528px;width:5px;height:5px;background:#111;border-radius:50%"></div>
<div class="t " style="left:475px;top:521.33px;font-size:14px;color:#111;font-weight:normal;letter-spacing:0px">Select a specific type of element</div>
<div class="t " style="left:451px;top:544.63px;font-size:14px;color:#111;font-weight:normal;letter-spacing:0px">You specify the element type first because when you come to browse for or select the Specification Package, if you have specified a particular element type the system</div>
<div class="t " style="left:451px;top:562.03px;font-size:14px;color:#111;font-weight:normal;letter-spacing:0.05px">automatically filters the Package selection to only those that contain elements of that type.</div>
<div class="t " style="left:448px;top:607.07px;font-size:16.5px;color:#1E2A3C;font-weight:normal;letter-spacing:-0.1px">Select the Package to work in</div>
<div class="t " style="left:451px;top:633.33px;font-size:14px;color:#111;font-weight:normal;letter-spacing:0px">Either:</div>
<div style="position:absolute;left:452px;top:663px;width:5px;height:5px;background:#111;border-radius:50%"></div>
<div class="t " style="left:475px;top:656.33px;font-size:14px;color:#111;font-weight:normal;letter-spacing:0px">Work with the default Package</div>
<div style="position:absolute;left:452px;top:681px;width:5px;height:5px;background:#111;border-radius:50%"></div>
<div class="t " style="left:475px;top:674.33px;font-size:14px;color:#111;font-weight:normal;letter-spacing:-0.06px">Select another existing Package in the model, or</div>
<div style="position:absolute;left:452px;top:699px;width:5px;height:5px;background:#111;border-radius:50%"></div>
<div class="t " style="left:475px;top:692.33px;font-size:14px;color:#111;font-weight:normal;letter-spacing:0px">Create a new Package in the model</div>
<div class="t " style="left:448px;top:737.27px;font-size:16.5px;color:#1E2A3C;font-weight:normal;letter-spacing:-0.23px">Set up List Header and Filter bars</div>
<div class="t " style="left:451px;top:763.33px;font-size:14px;color:#111;font-weight:normal;letter-spacing:0px">Use the Field Chooser dialog to organize the columns that contain the type of information you want to work with. You can use the <span style="text-decoration:underline;text-decoration-color:#6262A8;text-underline-offset:2px;text-decoration-thickness:1px">Filter bar</span> to select for information that</div>
<div class="t " style="left:451px;top:781.73px;font-size:14px;color:#111;font-weight:normal;letter-spacing:0px">includes specific values, or hide the <span style="text-decoration:underline;text-decoration-color:#6262A8;text-underline-offset:2px;text-decoration-thickness:1px">Filter bar</span> altogether.</div>
<div class="t " style="left:451px;top:804.33px;font-size:14px;color:#111;font-weight:normal;letter-spacing:-0.065px">Some of the columns contain indicators that represent records and documents associated with an element. You can access the item represented by an indicator by clicking</div>
<div class="t " style="left:451px;top:822.33px;font-size:14px;color:#111;font-weight:normal;letter-spacing:0px">on it.</div>
<div class="t " style="left:448px;top:866.87px;font-size:16.5px;color:#1E2A3C;font-weight:normal;letter-spacing:0px">Configure the display</div>
<div class="t " style="left:451px;top:893.73px;font-size:14px;color:#111;font-weight:normal;letter-spacing:-0.105px">As you begin, or at any other time in your use of the <span style="text-decoration:underline;text-decoration-color:#6262A8;text-underline-offset:2px;text-decoration-thickness:1px">Specification Manager</span>, you can change the appearance of the display to, for example, display any hierarchy of Packages</div>
<div class="t " style="left:451px;top:911.63px;font-size:14px;color:#111;font-weight:normal;letter-spacing:0px">under the selected Package in a separate panel, use smaller or larger text font, partially or totally hide Notes text, or show the element names in bold.</div>
<div class="t " style="left:451px;top:934.33px;font-size:14px;color:#111;font-weight:normal;letter-spacing:0px">You can further configure the display and the element definition by including level numbering and automatic naming, and by applying customized properties such as</div>
<div class="t " style="left:451px;top:952.83px;font-size:14px;color:#111;font-weight:normal;letter-spacing:-0.1px">additional Requirement Types, Glossary entries and <span style="text-decoration:underline;text-decoration-color:#6262A8;text-underline-offset:2px;text-decoration-thickness:1px">Tagged Value</span> Types.</div>
</div>
<div style="position:absolute;left:353px;top:1002px;width:1199px;height:24px;background:#4D6082"></div>
<svg style="position:absolute;left:357px;top:1005px;" width="17" height="17" viewBox="0 0 17 17"><g transform="scale(0.95)"><circle cx="8" cy="8" r="8" fill="#1414F0"/><circle cx="8" cy="8" r="5.9" fill="none" stroke="#fff" stroke-width="1.6"/><g transform="rotate(-38 8 8)"><path d="M8 2 V14 M2 8 H14" stroke="#fff" stroke-width="1.4"/></g></g></svg>
<div class="t " style="left:375px;top:1006.59px;font-size:11.5px;color:#E4E8F0;font-weight:normal;letter-spacing:-0.2px">Start Page</div>
<svg style="position:absolute;left:439px;top:1005px;" width="14" height="14" viewBox="0 0 14 14"><rect x="3" y="0.5" width="6" height="5" fill="#F0C040" stroke="#806010"/><rect x="0.5" y="6.5" width="12" height="6" fill="#F0C040" stroke="#806010"/><path d="M6 5 V7" stroke="#806010"/></svg>
<div class="t " style="left:456px;top:1006.59px;font-size:11.5px;color:#E4E8F0;font-weight:normal;letter-spacing:-0.2px">Status</div>
<div style="position:absolute;left:495px;top:1002px;width:164px;height:23px;background:#FBFBFC"></div>
<svg style="position:absolute;left:500px;top:1005px;" width="14" height="15" viewBox="0 0 14 15"><rect x="0.5" y="0.5" width="5" height="4" fill="#FFE0C0" stroke="#A02010"/><rect x="7.5" y="4.5" width="5" height="4" fill="#FFE0C0" stroke="#A02010"/><rect x="7.5" y="10.5" width="5" height="4" fill="#FFE0C0" stroke="#A02010"/><path d="M3 4.5 V12.5 H7.5 M3 6.5 H7.5" stroke="#A02010" fill="none"/></svg>
<div class="t " style="left:517px;top:1006.09px;font-size:11.5px;color:#105AAE;font-weight:normal;letter-spacing:0.15px;-webkit-text-stroke:0.45px #105AAE">Specification Manager</div>
<svg style="position:absolute;left:645px;top:1009px;" width="8" height="8" viewBox="0 0 8 8"><path d="M0.5 0.5 L7.5 7.5 M7.5 0.5 L0.5 7.5" stroke="#333" stroke-width="1.3"/></svg>
<div style="position:absolute;left:1516px;top:1006px;width:15px;height:15px;background:#2E3E5C"></div>
<svg style="position:absolute;left:1520px;top:1009px;" width="7" height="9" viewBox="0 0 7 9"><path d="M6 0.5 L0.8 4.5 L6 8.5Z" fill="none" stroke="#fff" stroke-width="1"/></svg>
<div style="position:absolute;left:1534px;top:1006px;width:15px;height:15px;background:#2E3E5C"></div>
<svg style="position:absolute;left:1538px;top:1009px;" width="7" height="9" viewBox="0 0 7 9"><path d="M0.8 0.5 L6 4.5 L0.8 8.5Z" fill="none" stroke="#fff" stroke-width="1"/></svg>
<div style="position:absolute;left:1552px;top:73px;width:4px;height:953px;background:#293955"></div>
<div style="position:absolute;left:1556px;top:73px;width:209px;height:22px;background:#4D6082"></div>
<div class="t " style="left:1560px;top:77.59px;font-size:11.5px;color:#FFFFFF;font-weight:normal;letter-spacing:0.3px">Toolbox</div>
<svg style="position:absolute;left:1717px;top:83px;" width="10" height="6" viewBox="0 0 10 6"><path d="M0 0 H9 L4.5 5Z" fill="#fff"/></svg>
<svg style="position:absolute;left:1735px;top:80px;" width="8" height="10" viewBox="0 0 8 10"><path d="M1.5 0.5 H6.5 M2.5 0.5 V5.5 M5.5 0.5 V5.5 M0.5 5.5 H7.5 M4 5.5 V9.5" fill="none" stroke="#fff" stroke-width="1.2"/></svg>
<svg style="position:absolute;left:1751px;top:81px;" width="8" height="8" viewBox="0 0 8 8"><path d="M0.5 0.5 L7.5 7.5 M7.5 0.5 L0.5 7.5" stroke="#fff" stroke-width="1.4"/></svg>
<div style="position:absolute;left:1556px;top:95px;width:209px;height:22px;background:#D6DBE8;border-top:1px solid #F4F6FA;box-sizing:border-box"></div>
<div class="t " style="left:1699px;top:100.59px;font-size:11.5px;color:#2A3550;font-weight:normal;letter-spacing:-0.4px">More tools...</div>
<div style="position:absolute;left:1556px;top:117px;width:209px;height:909px;background:#FBFBFC"></div>
<div style="position:absolute;left:1558px;top:118px;width:205px;height:16px;background:#E4E8F1"></div>
<svg style="position:absolute;left:1566px;top:123px;" width="6" height="6" viewBox="0 0 6 6"><path d="M6 0 V6 H0Z" fill="#6A7080"/></svg>
<div class="t " style="left:1579px;top:120.09px;font-size:11.5px;color:#1E2A3C;font-weight:bold;letter-spacing:-0.35px">Requirements</div>
<div style="position:absolute;left:1558px;top:246px;width:205px;height:16px;background:#E4E8F1"></div>
<svg style="position:absolute;left:1566px;top:251px;" width="6" height="6" viewBox="0 0 6 6"><path d="M6 0 V6 H0Z" fill="#6A7080"/></svg>
<div class="t " style="left:1579px;top:248.09px;font-size:11.5px;color:#1E2A3C;font-weight:bold;letter-spacing:-0.35px">Requirements</div>
<svg style="position:absolute;left:1580px;top:292px;" width="15" height="11" viewBox="0 0 15 11"><rect x="0.5" y="0.5" width="13" height="9.5" fill="#D0E2F6" stroke="#1E2436"/><rect x="1" y="1" width="2.3" height="8.5" fill="#D82020"/><path d="M5.5 5.2 L7.3 7.5 L11.2 2.6" fill="none" stroke="#008A20" stroke-width="1.4"/></svg>
<div class="t ui" style="left:1603px;top:291.09px;font-size:11.5px;color:#1A2233;font-weight:normal;letter-spacing:-0.08px">Business</div>
<svg style="position:absolute;left:1580px;top:312px;" width="15" height="11" viewBox="0 0 15 11"><rect x="0.5" y="0.5" width="13" height="9.5" fill="#D0E2F6" stroke="#1E2436"/><rect x="1" y="1" width="2.3" height="8.5" fill="#D82020"/><path d="M5.5 5.2 L7.3 7.5 L11.2 2.6" fill="none" stroke="#008A20" stroke-width="1.4"/></svg>
<div class="t ui" style="left:1603px;top:311.09px;font-size:11.5px;color:#1A2233;font-weight:normal;letter-spacing:-0.08px">User</div>
<svg style="position:absolute;left:1580px;top:332px;" width="15" height="11" viewBox="0 0 15 11"><rect x="0.5" y="0.5" width="13" height="9.5" fill="#D0E2F6" stroke="#1E2436"/><rect x="1" y="1" width="2.3" height="8.5" fill="#D82020"/><path d="M5.5 5.2 L7.3 7.5 L11.2 2.6" fill="none" stroke="#008A20" stroke-width="1.4"/></svg>
<div class="t ui" style="left:1603px;top:331.09px;font-size:11.5px;color:#1A2233;font-weight:normal;letter-spacing:-0.08px">Non-Functional</div>
<svg style="position:absolute;left:1580px;top:352px;" width="15" height="11" viewBox="0 0 15 11"><rect x="0.5" y="0.5" width="13" height="9.5" fill="#D0E2F6" stroke="#1E2436"/><rect x="1" y="1" width="2.3" height="8.5" fill="#D82020"/><path d="M5.5 5.2 L7.3 7.5 L11.2 2.6" fill="none" stroke="#008A20" stroke-width="1.4"/></svg>
<div class="t ui" style="left:1603px;top:351.09px;font-size:11.5px;color:#1A2233;font-weight:normal;letter-spacing:-0.08px">Architectural</div>
<svg style="position:absolute;left:1580px;top:372px;" width="15" height="11" viewBox="0 0 15 11"><rect x="0.5" y="0.5" width="13" height="9.5" fill="#D0E2F6" stroke="#1E2436"/><rect x="1" y="1" width="2.3" height="8.5" fill="#D82020"/><path d="M5.5 5.2 L7.3 7.5 L11.2 2.6" fill="none" stroke="#008A20" stroke-width="1.4"/></svg>
<div class="t ui" style="left:1603px;top:371.09px;font-size:11.5px;color:#1A2233;font-weight:normal;letter-spacing:-0.08px">Implementation</div>
<svg style="position:absolute;left:1580px;top:392px;" width="15" height="11" viewBox="0 0 15 11"><rect x="0.5" y="0.5" width="13" height="9.5" fill="#D0E2F6" stroke="#1E2436"/><rect x="1" y="1" width="2.3" height="8.5" fill="#D82020"/><path d="M5.5 5.2 L7.3 7.5 L11.2 2.6" fill="none" stroke="#008A20" stroke-width="1.4"/></svg>
<div class="t ui" style="left:1603px;top:391.09px;font-size:11.5px;color:#1A2233;font-weight:normal;letter-spacing:-0.08px">Regulatory</div>
<svg style="position:absolute;left:1580px;top:412px;" width="15" height="11" viewBox="0 0 15 11"><rect x="0.5" y="0.5" width="13" height="9.5" fill="#D0E2F6" stroke="#1E2436"/><rect x="1" y="1" width="2.3" height="8.5" fill="#D82020"/><path d="M5.5 5.2 L7.3 7.5 L11.2 2.6" fill="none" stroke="#008A20" stroke-width="1.4"/></svg>
<div class="t ui" style="left:1603px;top:411.09px;font-size:11.5px;color:#1A2233;font-weight:normal;letter-spacing:-0.08px">Security</div>
<svg style="position:absolute;left:1581px;top:430px;" width="13" height="15" viewBox="0 0 13 15"><defs><linearGradient id="pg" x1="0" y1="0" x2="0" y2="1"><stop offset="0.5" stop-color="#F6F8FE"/><stop offset="1" stop-color="#B8D0F0"/></linearGradient></defs><path d="M0.5 0.5 H8 L11.5 4 V13.5 H0.5Z" fill="url(#pg)" stroke="#2A2E5A"/><path d="M8 0.5 V4 H11.5" fill="#fff" stroke="#5A60A0" stroke-width="0.8"/><path d="M2 3.5 H6 M2 5.5 H7 M2 7.5 H9.5 M2 9.5 H9.5" stroke="#5A6088"/></svg>
<div class="t ui" style="left:1603px;top:431.09px;font-size:11.5px;color:#1A2233;font-weight:normal;letter-spacing:0px">Requirements Checklist</div>
<div style="position:absolute;left:1558px;top:454px;width:205px;height:16px;background:#E4E8F1"></div>
<svg style="position:absolute;left:1565px;top:457px;" width="6" height="10" viewBox="0 0 6 10"><path d="M0.5 0.5 L5.5 5 L0.5 9.5Z" fill="none" stroke="#8890A0"/></svg>
<div class="t " style="left:1579px;top:456.09px;font-size:11.5px;color:#1E2A3C;font-weight:bold;letter-spacing:-0.35px">Requirements Relationships</div>
<div style="position:absolute;left:1558px;top:472px;width:205px;height:16px;background:#E4E8F1"></div>
<svg style="position:absolute;left:1566px;top:477px;" width="6" height="6" viewBox="0 0 6 6"><path d="M6 0 V6 H0Z" fill="#6A7080"/></svg>
<div class="t " style="left:1579px;top:474.09px;font-size:11.5px;color:#1E2A3C;font-weight:bold;letter-spacing:-0.35px">Patterns</div>
<svg style="position:absolute;left:1579px;top:496px;" width="16" height="15" viewBox="0 0 16 15"><path d="M5.5 0.5 L0.8 7 L5.5 13.5 M10.5 0.5 L15.2 7 L10.5 13.5" fill="none" stroke="#1C2238" stroke-width="1.5"/><path d="M7 3 L4.2 7 L7 11 M9 3 L11.8 7 L9 11" fill="none" stroke="#1C2238" stroke-width="1.2"/></svg>
<div class="t ui" style="left:1603px;top:497.09px;font-size:11.5px;color:#1A2233;font-weight:normal;letter-spacing:-0.08px">Functional Requirements</div>
<svg style="position:absolute;left:1579px;top:516px;" width="16" height="15" viewBox="0 0 16 15"><path d="M5.5 0.5 L0.8 7 L5.5 13.5 M10.5 0.5 L15.2 7 L10.5 13.5" fill="none" stroke="#1C2238" stroke-width="1.5"/><path d="M7 3 L4.2 7 L7 11 M9 3 L11.8 7 L9 11" fill="none" stroke="#1C2238" stroke-width="1.2"/></svg>
<div class="t ui" style="left:1603px;top:517.09px;font-size:11.5px;color:#1A2233;font-weight:normal;letter-spacing:-0.08px">Non-Functional Requirements</div>
<div style="position:absolute;left:1558px;top:540px;width:205px;height:16px;background:#E4E8F1"></div>
<svg style="position:absolute;left:1565px;top:543px;" width="6" height="10" viewBox="0 0 6 10"><path d="M0.5 0.5 L5.5 5 L0.5 9.5Z" fill="none" stroke="#8890A0"/></svg>
<div class="t " style="left:1579px;top:542.09px;font-size:11.5px;color:#1E2A3C;font-weight:bold;letter-spacing:-0.35px">Common</div>
<div style="position:absolute;left:1558px;top:558px;width:205px;height:16px;background:#E4E8F1"></div>
<svg style="position:absolute;left:1566px;top:563px;" width="6" height="6" viewBox="0 0 6 6"><path d="M6 0 V6 H0Z" fill="#6A7080"/></svg>
<div class="t " style="left:1579px;top:560.09px;font-size:11.5px;color:#1E2A3C;font-weight:bold;letter-spacing:-0.35px">Artifacts</div>
<svg style="position:absolute;left:1581px;top:582px;" width="13" height="15" viewBox="0 0 13 15"><defs><linearGradient id="pg" x1="0" y1="0" x2="0" y2="1"><stop offset="0.5" stop-color="#F6F8FE"/><stop offset="1" stop-color="#B8D0F0"/></linearGradient></defs><path d="M0.5 0.5 H8 L11.5 4 V13.5 H0.5Z" fill="url(#pg)" stroke="#2A2E5A"/><path d="M8 0.5 V4 H11.5" fill="#fff" stroke="#5A60A0" stroke-width="0.8"/><path d="M2 3.5 H6 M2 5.5 H7 M2 7.5 H9.5 M2 9.5 H9.5" stroke="#5A6088"/></svg>
<div class="t ui" style="left:1603px;top:583.09px;font-size:11.5px;color:#1A2233;font-weight:normal;letter-spacing:-0.08px">Artifact</div>
<svg style="position:absolute;left:1581px;top:602px;" width="13" height="15" viewBox="0 0 13 15"><defs><linearGradient id="pg" x1="0" y1="0" x2="0" y2="1"><stop offset="0.5" stop-color="#F6F8FE"/><stop offset="1" stop-color="#B8D0F0"/></linearGradient></defs><path d="M0.5 0.5 H8 L11.5 4 V13.5 H0.5Z" fill="url(#pg)" stroke="#2A2E5A"/><path d="M8 0.5 V4 H11.5" fill="#fff" stroke="#5A60A0" stroke-width="0.8"/><path d="M2 3.5 H6 M2 5.5 H7 M2 7.5 H9.5 M2 9.5 H9.5" stroke="#5A6088"/><path d="M6.5 12.5 L9.5 8 L10 12" stroke="#E02020" stroke-width="1.4" fill="none"/></svg>
<div class="t ui" style="left:1603px;top:603.09px;font-size:11.5px;color:#1A2233;font-weight:normal;letter-spacing:-0.08px">Document</div>
<svg style="position:absolute;left:1581px;top:622px;" width="13" height="15" viewBox="0 0 13 15"><defs><linearGradient id="pg" x1="0" y1="0" x2="0" y2="1"><stop offset="0.5" stop-color="#F6F8FE"/><stop offset="1" stop-color="#B8D0F0"/></linearGradient></defs><path d="M0.5 0.5 H8 L11.5 4 V13.5 H0.5Z" fill="url(#pg)" stroke="#2A2E5A"/><path d="M8 0.5 V4 H11.5" fill="#fff" stroke="#5A60A0" stroke-width="0.8"/><path d="M2 3.5 H6 M2 5.5 H7 M2 7.5 H9.5 M2 9.5 H9.5" stroke="#5A6088"/></svg>
<div class="t ui" style="left:1603px;top:623.09px;font-size:11.5px;color:#1A2233;font-weight:normal;letter-spacing:-0.08px">Checklist</div>
<svg style="position:absolute;left:1581px;top:642px;" width="13" height="15" viewBox="0 0 13 15"><defs><linearGradient id="pg" x1="0" y1="0" x2="0" y2="1"><stop offset="0.5" stop-color="#F6F8FE"/><stop offset="1" stop-color="#B8D0F0"/></linearGradient></defs><path d="M0.5 0.5 H8 L11.5 4 V13.5 H0.5Z" fill="url(#pg)" stroke="#2A2E5A"/><path d="M8 0.5 V4 H11.5" fill="#fff" stroke="#5A60A0" stroke-width="0.8"/><path d="M2 3.5 H6 M2 5.5 H7 M2 7.5 H9.5 M2 9.5 H9.5" stroke="#5A6088"/><path d="M6.5 12.5 L9.5 8 L10 12" stroke="#E02020" stroke-width="1.4" fill="none"/></svg>
<div class="t ui" style="left:1603px;top:643.09px;font-size:11.5px;color:#1A2233;font-weight:normal;letter-spacing:-0.08px">User Story</div>
<svg style="position:absolute;left:1581px;top:662px;" width="13" height="15" viewBox="0 0 13 15"><defs><linearGradient id="pg" x1="0" y1="0" x2="0" y2="1"><stop offset="0.5" stop-color="#F6F8FE"/><stop offset="1" stop-color="#B8D0F0"/></linearGradient></defs><path d="M0.5 0.5 H8 L11.5 4 V13.5 H0.5Z" fill="url(#pg)" stroke="#2A2E5A"/><path d="M8 0.5 V4 H11.5" fill="#fff" stroke="#5A60A0" stroke-width="0.8"/><path d="M2 3.5 H6 M2 5.5 H7 M2 7.5 H9.5 M2 9.5 H9.5" stroke="#5A6088"/></svg>
<div class="t ui" style="left:1603px;top:663.09px;font-size:11.5px;color:#1A2233;font-weight:normal;letter-spacing:-0.08px">Working Set</div>
<svg style="position:absolute;left:1581px;top:683px;" width="13" height="14" viewBox="0 0 13 14"><rect x="0.5" y="0.5" width="11.5" height="12.5" fill="#FFFFFF" stroke="#3A4EA8"/><path d="M0.5 2.5 H12 M0.5 8.5 H12" stroke="#3A4EA8"/><path d="M2.5 4.7 H10 M2.5 6.7 H10 M2.5 10.7 H10" stroke="#3470C8" stroke-width="1.1"/></svg>
<div class="t ui" style="left:1603px;top:683.09px;font-size:11.5px;color:#1A2233;font-weight:normal;letter-spacing:-0.08px">Standard Chart</div>
<svg style="position:absolute;left:1581px;top:703px;" width="13" height="14" viewBox="0 0 13 14"><rect x="0.5" y="0.5" width="11.5" height="12.5" fill="#FFFFFF" stroke="#3A4EA8"/><path d="M0.5 2.5 H12 M0.5 8.5 H12" stroke="#3A4EA8"/><path d="M2.5 4.7 H10 M2.5 6.7 H10 M2.5 10.7 H10" stroke="#3470C8" stroke-width="1.1"/></svg>
<div class="t ui" style="left:1603px;top:703.09px;font-size:11.5px;color:#1A2233;font-weight:normal;letter-spacing:-0.08px">Time Series Chart</div>
<svg style="position:absolute;left:1581px;top:723px;" width="13" height="14" viewBox="0 0 13 14"><rect x="0.5" y="0.5" width="11.5" height="12.5" fill="#FFFFFF" stroke="#3A4EA8"/><path d="M0.5 2.5 H12 M0.5 8.5 H12" stroke="#3A4EA8"/><path d="M2.5 4.7 H10 M2.5 6.7 H10 M2.5 10.7 H10" stroke="#3470C8" stroke-width="1.1"/></svg>
<div class="t ui" style="left:1603px;top:723.09px;font-size:11.5px;color:#1A2233;font-weight:normal;letter-spacing:-0.08px">Model View</div>
<svg style="position:absolute;left:1581px;top:742px;" width="13" height="15" viewBox="0 0 13 15"><defs><linearGradient id="pg" x1="0" y1="0" x2="0" y2="1"><stop offset="0.5" stop-color="#F6F8FE"/><stop offset="1" stop-color="#B8D0F0"/></linearGradient></defs><path d="M0.5 0.5 H8 L11.5 4 V13.5 H0.5Z" fill="url(#pg)" stroke="#2A2E5A"/><path d="M8 0.5 V4 H11.5" fill="#fff" stroke="#5A60A0" stroke-width="0.8"/><path d="M2 3.5 H6 M2 5.5 H7 M2 7.5 H9.5 M2 9.5 H9.5" stroke="#5A6088"/></svg>
<div class="t ui" style="left:1603px;top:743.09px;font-size:11.5px;color:#1A2233;font-weight:normal;letter-spacing:-0.08px">Report Specification</div>
<svg style="position:absolute;left:1581px;top:762px;" width="13" height="15" viewBox="0 0 13 15"><defs><linearGradient id="pg" x1="0" y1="0" x2="0" y2="1"><stop offset="0.5" stop-color="#F6F8FE"/><stop offset="1" stop-color="#B8D0F0"/></linearGradient></defs><path d="M0.5 0.5 H8 L11.5 4 V13.5 H0.5Z" fill="url(#pg)" stroke="#2A2E5A"/><path d="M8 0.5 V4 H11.5" fill="#fff" stroke="#5A60A0" stroke-width="0.8"/><path d="M2 3.5 H6 M2 5.5 H7 M2 7.5 H9.5 M2 9.5 H9.5" stroke="#5A6088"/></svg>
<div class="t ui" style="left:1603px;top:763.09px;font-size:11.5px;color:#1A2233;font-weight:normal;letter-spacing:-0.08px">Matrix Specification</div>
<svg style="position:absolute;left:1581px;top:782px;" width="13" height="15" viewBox="0 0 13 15"><defs><linearGradient id="pg" x1="0" y1="0" x2="0" y2="1"><stop offset="0.5" stop-color="#F6F8FE"/><stop offset="1" stop-color="#B8D0F0"/></linearGradient></defs><path d="M0.5 0.5 H8 L11.5 4 V13.5 H0.5Z" fill="url(#pg)" stroke="#2A2E5A"/><path d="M8 0.5 V4 H11.5" fill="#fff" stroke="#5A60A0" stroke-width="0.8"/><path d="M2 3.5 H6 M2 5.5 H7 M2 7.5 H9.5 M2 9.5 H9.5" stroke="#5A6088"/></svg>
<div class="t ui" style="left:1603px;top:783.09px;font-size:11.5px;color:#1A2233;font-weight:normal;letter-spacing:-0.08px">Executable StateMachine</div>
<svg style="position:absolute;left:1581px;top:802px;" width="13" height="15" viewBox="0 0 13 15"><defs><linearGradient id="pg" x1="0" y1="0" x2="0" y2="1"><stop offset="0.5" stop-color="#F6F8FE"/><stop offset="1" stop-color="#B8D0F0"/></linearGradient></defs><path d="M0.5 0.5 H8 L11.5 4 V13.5 H0.5Z" fill="url(#pg)" stroke="#2A2E5A"/><path d="M8 0.5 V4 H11.5" fill="#fff" stroke="#5A60A0" stroke-width="0.8"/><path d="M2 3.5 H6 M2 5.5 H7 M2 7.5 H9.5 M2 9.5 H9.5" stroke="#5A6088"/></svg>
<div class="t ui" style="left:1603px;top:803.09px;font-size:11.5px;color:#1A2233;font-weight:normal;letter-spacing:-0.08px">Business Process Simulation</div>
<svg style="position:absolute;left:1581px;top:823px;" width="13" height="14" viewBox="0 0 13 14"><rect x="0.5" y="0.5" width="11.5" height="12.5" fill="#FFFFFF" stroke="#3A4EA8"/><path d="M0.5 2.5 H12 M0.5 8.5 H12" stroke="#3A4EA8"/><path d="M2.5 4.7 H10 M2.5 6.7 H10 M2.5 10.7 H10" stroke="#3470C8" stroke-width="1.1"/></svg>
<div class="t ui" style="left:1603px;top:823.09px;font-size:11.5px;color:#1A2233;font-weight:normal;letter-spacing:-0.08px">BPSim Result Chart</div>
<svg style="position:absolute;left:1581px;top:843px;" width="13" height="14" viewBox="0 0 13 14"><rect x="0.5" y="0.5" width="11.5" height="12.5" fill="#FFFFFF" stroke="#3A4EA8"/><path d="M0.5 2.5 H12 M0.5 8.5 H12" stroke="#3A4EA8"/><path d="M2.5 4.7 H10 M2.5 6.7 H10 M2.5 10.7 H10" stroke="#3470C8" stroke-width="1.1"/></svg>
<div class="t ui" style="left:1603px;top:843.09px;font-size:11.5px;color:#1A2233;font-weight:normal;letter-spacing:-0.08px">BPSim Custom Result Chart</div>
<div style="position:absolute;left:1765px;top:73px;width:5px;height:953px;background:#293955"></div>
<div style="position:absolute;left:1770px;top:74px;width:150px;height:23px;background:#4D6082"></div>
<div class="t " style="left:1775px;top:79.29px;font-size:11.5px;color:#FFFFFF;font-weight:normal;letter-spacing:0.2px">Start</div>
<div style="position:absolute;left:1770px;top:97px;width:150px;height:892px;background:#F1F4FD"></div>
<div style="position:absolute;left:1771px;top:99px;width:147px;height:16px;background:#E3E6EF"></div>
<svg style="position:absolute;left:1779px;top:105px;" width="6" height="6" viewBox="0 0 6 6"><path d="M6 0 V6 H0Z" fill="#6A7080"/></svg>
<div class="t " style="left:1795px;top:100.59px;font-size:11.5px;color:#1E2A3C;font-weight:bold;letter-spacing:-0.3px">Project</div>
<div class="t ui" style="left:1798px;top:122.09px;font-size:11.5px;color:#1A2233;font-weight:normal;letter-spacing:-0.1px">New File</div>
<div class="t ui" style="left:1798px;top:144.09px;font-size:11.5px;color:#1A2233;font-weight:normal;letter-spacing:-0.1px">Open File</div>
<div class="t ui" style="left:1798px;top:166.09px;font-size:11.5px;color:#1A2233;font-weight:normal;letter-spacing:-0.1px">Server Connection</div>
<div class="t ui" style="left:1798px;top:188.09px;font-size:11.5px;color:#1A2233;font-weight:normal;letter-spacing:-0.1px">Cloud Connection</div>
<div style="position:absolute;left:1771px;top:207px;width:147px;height:16px;background:#E3E6EF"></div>
<svg style="position:absolute;left:1779px;top:213px;" width="6" height="6" viewBox="0 0 6 6"><path d="M6 0 V6 H0Z" fill="#6A7080"/></svg>
<div class="t " style="left:1795px;top:208.59px;font-size:11.5px;color:#1E2A3C;font-weight:bold;letter-spacing:-0.3px">Today</div>
<div class="t ui" style="left:1798px;top:230.09px;font-size:11.5px;color:#1A2233;font-weight:normal;letter-spacing:-0.1px">Calendar</div>
<div class="t ui" style="left:1798px;top:252.09px;font-size:11.5px;color:#1A2233;font-weight:normal;letter-spacing:-0.1px">Model Mail</div>
<div class="t ui" style="left:1798px;top:274.09px;font-size:11.5px;color:#1A2233;font-weight:normal;letter-spacing:-0.1px">Personal Tasks</div>
<div class="t ui" style="left:1798px;top:296.09px;font-size:11.5px;color:#1A2233;font-weight:normal;letter-spacing:-0.1px">Project Tasks</div>
<div style="position:absolute;left:1771px;top:315px;width:147px;height:16px;background:#E3E6EF"></div>
<svg style="position:absolute;left:1779px;top:321px;" width="6" height="6" viewBox="0 0 6 6"><path d="M6 0 V6 H0Z" fill="#6A7080"/></svg>
<div class="t " style="left:1795px;top:316.59px;font-size:11.5px;color:#1E2A3C;font-weight:bold;letter-spacing:-0.3px">Changes</div>
<div class="t ui" style="left:1798px;top:338.09px;font-size:11.5px;color:#1A2233;font-weight:normal;letter-spacing:-0.1px">Elements</div>
<div class="t ui" style="left:1798px;top:360.09px;font-size:11.5px;color:#1A2233;font-weight:normal;letter-spacing:-0.1px">Diagrams</div>
<div class="t ui" style="left:1798px;top:382.09px;font-size:11.5px;color:#1A2233;font-weight:normal;letter-spacing:-0.1px">Discussions</div>
<div style="position:absolute;left:1771px;top:401px;width:147px;height:16px;background:#E3E6EF"></div>
<svg style="position:absolute;left:1779px;top:407px;" width="6" height="6" viewBox="0 0 6 6"><path d="M6 0 V6 H0Z" fill="#6A7080"/></svg>
<div class="t " style="left:1795px;top:402.59px;font-size:11.5px;color:#1E2A3C;font-weight:bold;letter-spacing:-0.3px">Search</div>
<div class="t ui" style="left:1798px;top:424.09px;font-size:11.5px;color:#1A2233;font-weight:normal;letter-spacing:-0.1px">Find in Model</div>
<div class="t ui" style="left:1798px;top:446.09px;font-size:11.5px;color:#1A2233;font-weight:normal;letter-spacing:-0.1px">Find in Files</div>
<div style="position:absolute;left:1771px;top:465px;width:147px;height:16px;background:#E3E6EF"></div>
<svg style="position:absolute;left:1778px;top:468px;" width="6" height="10" viewBox="0 0 6 10"><path d="M0.5 0.5 L5.5 5 L0.5 9.5Z" fill="none" stroke="#8890A0"/></svg>
<div class="t " style="left:1795px;top:466.59px;font-size:11.5px;color:#1E2A3C;font-weight:bold;letter-spacing:-0.3px">Help</div>
<div style="position:absolute;left:1771px;top:483px;width:147px;height:16px;background:#E3E6EF"></div>
<svg style="position:absolute;left:1778px;top:486px;" width="6" height="10" viewBox="0 0 6 10"><path d="M0.5 0.5 L5.5 5 L0.5 9.5Z" fill="none" stroke="#8890A0"/></svg>
<div class="t " style="left:1795px;top:484.59px;font-size:11.5px;color:#1E2A3C;font-weight:bold;letter-spacing:-0.3px">Recent Models</div>
<div style="position:absolute;left:1770px;top:989px;width:150px;height:8px;background:#4D6082"></div>
<svg style="position:absolute;left:1819px;top:992px;" width="50" height="3" viewBox="0 0 50 3"><rect x="0" y="0" width="2" height="2" fill="#fff"/><rect x="5" y="0" width="2" height="2" fill="#fff"/><rect x="10" y="0" width="2" height="2" fill="#fff"/><rect x="15" y="0" width="2" height="2" fill="#fff"/><rect x="20" y="0" width="2" height="2" fill="#fff"/><rect x="25" y="0" width="2" height="2" fill="#fff"/><rect x="30" y="0" width="2" height="2" fill="#fff"/><rect x="35" y="0" width="2" height="2" fill="#fff"/><rect x="40" y="0" width="2" height="2" fill="#fff"/><rect x="45" y="0" width="2" height="2" fill="#fff"/></svg>
<div style="position:absolute;left:1770px;top:997px;width:150px;height:29px;background:#CFD6E5"></div>
<div style="position:absolute;left:1897px;top:997px;width:23px;height:29px;background:#D8DDEA"></div>
<div style="position:absolute;left:1777px;top:997px;width:26px;height:29px;background:#FFF2B8"></div>
<svg style="position:absolute;left:1782px;top:1003px;" width="17" height="16" viewBox="0 0 17 16"><path d="M0.5 8 L8 1 L15.5 8" fill="none" stroke="#555" stroke-width="1.4"/><path d="M2.5 8 L8 3 L13.5 8 V15 H2.5Z" fill="#555"/><rect x="6.5" y="10" width="3" height="5" fill="#FFF2B8"/><rect x="12" y="1" width="1.6" height="4" fill="#555"/></svg>
<svg style="position:absolute;left:1806px;top:1003px;" width="17" height="16" viewBox="0 0 17 16"><rect x="5" y="1" width="10.5" height="9" fill="none" stroke="#555" stroke-width="2"/><rect x="1" y="6" width="10.5" height="9" fill="none" stroke="#555" stroke-width="2"/></svg>
<svg style="position:absolute;left:1831px;top:1004px;" width="16" height="15" viewBox="0 0 16 15"><rect x="4.5" y="0" width="7" height="5" fill="#555"/><path d="M8 5 V8 M2.5 8 H13.5 M2.5 8 V10 M8 8 V10 M13.5 8 V10" stroke="#555" stroke-width="1.2" fill="none"/><rect x="0" y="10" width="4.5" height="4" fill="#555"/><rect x="5.8" y="10" width="4.5" height="4" fill="#555"/><rect x="11.5" y="10" width="4.5" height="4" fill="#555"/></svg>
<svg style="position:absolute;left:1854px;top:1003px;" width="17" height="16" viewBox="0 0 17 16"><rect x="0" y="1" width="14" height="11" fill="#555"/><circle cx="11.5" cy="11.5" r="4.5" fill="#555" stroke="#CFD6E5" stroke-width="1"/><path d="M9.5 11.5 L11 13 L13.5 10" stroke="#CFD6E5" stroke-width="1.2" fill="none"/></svg>
<svg style="position:absolute;left:1878px;top:1003px;" width="17" height="16" viewBox="0 0 17 16"><path d="M1 1 L8 8 L1 15 M7 1 L14 8 L7 15" fill="none" stroke="#555" stroke-width="1.6"/></svg>
<svg style="position:absolute;left:1905px;top:1004px;" width="8" height="14" viewBox="0 0 8 14"><path d="M0.5 0.5 L3.5 3 L0.5 5.5 M4 0.5 L7 3 L4 5.5" fill="none" stroke="#444" stroke-width="1"/><path d="M1.5 9 H6.5 L4 11.5Z" fill="#555"/></svg>
<div style="position:absolute;left:1602px;top:1038px;width:5px;height:1px;background:#E8EEF5"></div>
<div style="position:absolute;left:1624px;top:1038px;width:84px;height:1px;background:#9CBAD8"></div>
<div style="position:absolute;left:1619px;top:1031px;width:6px;height:13px;background:#C8CFD8;border:1px solid #8A94A0;box-sizing:border-box"></div>
<div style="position:absolute;left:1719px;top:1038px;width:7px;height:1px;background:#E8EEF5"></div>
<div style="position:absolute;left:1722px;top:1035px;width:1px;height:7px;background:#E8EEF5"></div>
<div class="t " style="left:1742px;top:1031.59px;font-size:11.5px;color:#6B94BC;font-weight:normal;letter-spacing:-0.3px">CAP</div>
<div class="t " style="left:1780px;top:1031.59px;font-size:11.5px;color:#FFFFFF;font-weight:normal;letter-spacing:-0.3px">NUM</div>
<div class="t " style="left:1827px;top:1031.59px;font-size:11.5px;color:#6B94BC;font-weight:normal;letter-spacing:-0.4px">SCRL</div>
<div class="t " style="left:1871px;top:1031.59px;font-size:11.5px;color:#FFFFFF;font-weight:normal;letter-spacing:-0.5px">CLOUD</div>
<svg style="position:absolute;left:16px;top:1045px;" width="23" height="8" viewBox="0 0 23 8"><ellipse cx="11.5" cy="7" rx="10.5" ry="6" fill="#D0D4DA" stroke="#1A3A5A" stroke-width="1"/></svg>
<div style="position:absolute;left:1485px;top:122px;width:218px;height:166px;background:#E9EEFB;border:1px solid #A0AABB;box-sizing:border-box;box-shadow:3px 3px 4px rgba(0,0,0,0.28)"></div>
<div style="position:absolute;left:1486px;top:123px;width:24px;height:164px;background:#F0F3FC"></div>
<div style="position:absolute;left:1488px;top:190px;width:212px;height:21px;background:#FFF2B8"></div>
<div class="t ui" style="left:1516px;top:129.09px;font-size:11.5px;color:#10141E;font-weight:normal;letter-spacing:0.05px">Specification Package</div>
<svg style="position:absolute;left:1692px;top:131px;" width="4" height="8" viewBox="0 0 4 8"><path d="M0 0 L4 4 L0 8Z" fill="#111"/></svg>
<div class="t ui" style="left:1516px;top:151.09px;font-size:11.5px;color:#10141E;font-weight:normal;letter-spacing:0.05px">Default Specification Type</div>
<svg style="position:absolute;left:1692px;top:153px;" width="4" height="8" viewBox="0 0 4 8"><path d="M0 0 L4 4 L0 8Z" fill="#111"/></svg>
<div class="t ui" style="left:1516px;top:173.09px;font-size:11.5px;color:#10141E;font-weight:normal;letter-spacing:0.05px">Open Relationship Matrix</div>
<svg style="position:absolute;left:1692px;top:175px;" width="4" height="8" viewBox="0 0 4 8"><path d="M0 0 L4 4 L0 8Z" fill="#111"/></svg>
<div class="t ui" style="left:1516px;top:195.09px;font-size:11.5px;color:#10141E;font-weight:normal;letter-spacing:0.05px">Specification Review</div>
<svg style="position:absolute;left:1692px;top:197px;" width="4" height="8" viewBox="0 0 4 8"><path d="M0 0 L4 4 L0 8Z" fill="#111"/></svg>
<div class="t ui" style="left:1516px;top:217.09px;font-size:11.5px;color:#10141E;font-weight:normal;letter-spacing:0.05px">Specification Management</div>
<svg style="position:absolute;left:1692px;top:219px;" width="4" height="8" viewBox="0 0 4 8"><path d="M0 0 L4 4 L0 8Z" fill="#111"/></svg>
<div class="t ui" style="left:1516px;top:239.09px;font-size:11.5px;color:#10141E;font-weight:normal;letter-spacing:0.05px">Documentation and QA</div>
<svg style="position:absolute;left:1692px;top:241px;" width="4" height="8" viewBox="0 0 4 8"><path d="M0 0 L4 4 L0 8Z" fill="#111"/></svg>
<div class="t ui" style="left:1516px;top:269.09px;font-size:11.5px;color:#10141E;font-weight:normal;letter-spacing:0.05px">Appearance</div>
<svg style="position:absolute;left:1692px;top:271px;" width="4" height="8" viewBox="0 0 4 8"><path d="M0 0 L4 4 L0 8Z" fill="#111"/></svg>
<div style="position:absolute;left:1517px;top:260px;width:180px;height:1px;background:#C4CAD6"></div>
<div style="position:absolute;left:1161px;top:188px;width:324px;height:204px;background:#E9EEFB;border:1px solid #A0AABB;box-sizing:border-box;box-shadow:3px 3px 4px rgba(0,0,0,0.28)"></div>
<div style="position:absolute;left:1162px;top:189px;width:24px;height:202px;background:#F0F3FC"></div>
<div style="position:absolute;left:1164px;top:190px;width:318px;height:22px;background:#FFF3BE"></div>
<div class="t ui" style="left:1192px;top:195.09px;font-size:11.5px;color:#10141E;font-weight:normal;letter-spacing:-0.15px">Create Review Document</div>
<div class="t ui" style="left:1192px;top:217.09px;font-size:11.5px;color:#10141E;font-weight:normal;letter-spacing:0.05px">Create Review</div>
<div style="position:absolute;left:1192px;top:238px;width:287px;height:1px;background:#C4CAD6"></div>
<div class="t ui" style="left:1192px;top:246.09px;font-size:11.5px;color:#10141E;font-weight:normal;letter-spacing:0.05px">Open Review</div>
<div class="t ui" style="left:1347.5px;top:268.09px;font-size:11.5px;color:#10141E;font-weight:normal;letter-spacing:0.05px">Folder</div>
<div style="position:absolute;left:1192px;top:290px;width:287px;height:1px;background:#C4CAD6"></div>
<div class="t ui" style="left:1192px;top:299.09px;font-size:11.5px;color:#8A8F99;font-weight:normal;letter-spacing:0.05px">Current Reviews</div>
<div style="position:absolute;left:1192px;top:320px;width:287px;height:1px;background:#C4CAD6"></div>
<div class="t ui" style="left:1192px;top:329.09px;font-size:11.5px;color:#10141E;font-weight:normal;letter-spacing:0.05px">Team Review</div>
<div class="t " style="left:1406px;top:329.09px;font-size:11.5px;color:#10141E;font-weight:normal;letter-spacing:-0.15px">Ctrl+Alt+U</div>
<div class="t ui" style="left:1192px;top:351.09px;font-size:11.5px;color:#10141E;font-weight:normal;letter-spacing:0.05px">Element Discussions</div>
<div class="t ui" style="left:1192px;top:373.09px;font-size:11.5px;color:#10141E;font-weight:normal;letter-spacing:0.05px">Model Mail</div>
<div style="position:absolute;left:1178px;top:218px;width:170px;height:68px;background:linear-gradient(180deg,#FFFFFF,#D9DCE7);border:1px solid #A4A8B0;box-sizing:border-box;box-shadow:3px 3px 4px rgba(0,0,0,0.35)"></div>
<div class="t " style="left:1184px;top:223.04px;font-size:11px;color:#1B2233;font-weight:bold;letter-spacing:-0.2px">Create Review Document</div>
<div class="t ui" style="left:1184px;top:242.04px;font-size:11px;color:#1B2233;font-weight:normal;letter-spacing:0.5px">Share, review and collaborate</div>
<div class="t ui" style="left:1184px;top:255.04px;font-size:11px;color:#1B2233;font-weight:normal;letter-spacing:0.5px">information about the current</div>
<div class="t ui" style="left:1184px;top:268.05px;font-size:11px;color:#1B2233;font-weight:normal;letter-spacing:0.5px">specification view</div>
<svg style="position:absolute;left:1178px;top:197px;" width="12" height="20" viewBox="0 0 12 20"><path d="M0.5 0.5 V16 L4.2 12.5 L6.8 18.5 L9 17.5 L6.5 11.8 H11.5Z" fill="#fff" stroke="#000" stroke-width="1"/></svg>
</body></html>
